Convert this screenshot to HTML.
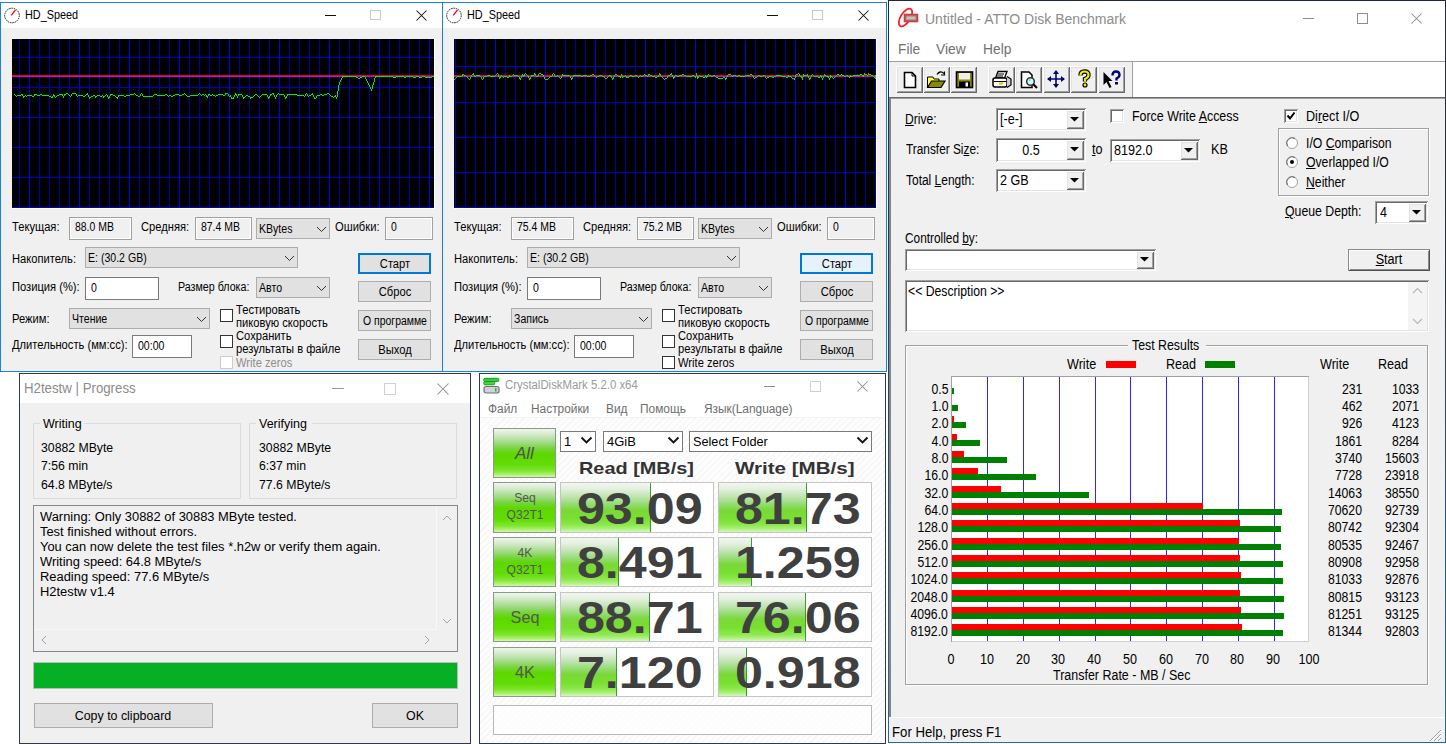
<!DOCTYPE html><html><head><meta charset="utf-8"><style>
html,body{margin:0;padding:0}
body{width:1446px;height:744px;overflow:hidden;position:relative;background:#fff;font-family:"Liberation Sans",sans-serif}
.a{position:absolute}
.t{position:absolute;white-space:pre;line-height:1}
</style></head><body>
<div class="a" style="left:0px;top:2px;width:445px;height:370px;background:#f0f0f0;border:1px solid #1883d7;box-sizing:border-box;"></div>
<div class="a" style="left:1px;top:3px;width:443px;height:25px;background:#fff;"></div>
<svg class="a" style="left:3px;top:6px" width="19" height="19"><circle cx="9" cy="9.5" r="7.3" fill="none" stroke="#222" stroke-width="1" stroke-dasharray="1.6 0.8"/><line x1="8.3" y1="9.3" x2="12.5" y2="3.8" stroke="#f00" stroke-width="1.3"/></svg>
<div class="t" style="left:25px;top:9px;font-size:12px;color:#000;font-weight:400;transform:scaleX(0.905);transform-origin:0 0;">HD_Speed</div>
<div class="a" style="left:325px;top:15px;width:11px;height:1px;background:#111;"></div>
<div class="a" style="left:370px;top:10px;width:11px;height:10px;border:1px solid #c8c8c8;box-sizing:border-box;"></div>
<svg class="a" style="left:415px;top:9px" width="13" height="13"><path d="M1.5 1.5 L11.5 11.5 M11.5 1.5 L1.5 11.5" stroke="#111" stroke-width="1.05"/></svg>
<div class="a" style="left:12px;top:39px;width:422px;height:169px;background:#000;"></div>
<div class="a" style="left:12px;top:208px;width:423px;height:1px;background:#fff;"></div>
<div class="a" style="left:434px;top:39px;width:1px;height:170px;background:#fff;"></div>
<svg class="a" style="left:12px;top:39px" width="422" height="169" shape-rendering="crispEdges"><rect x="0" y="18" width="422" height="1" fill="#0000c8"/><rect x="0" y="48" width="422" height="1" fill="#0000c8"/><rect x="0" y="78" width="422" height="1" fill="#0000c8"/><rect x="0" y="108" width="422" height="1" fill="#0000c8"/><rect x="0" y="138" width="422" height="1" fill="#0000c8"/><rect x="0" y="168" width="422" height="1" fill="#0000c8"/><rect x="7" y="0" width="1" height="169" fill="#0000a8"/><rect x="17" y="0" width="1" height="169" fill="#0000f0"/><rect x="27" y="0" width="1" height="169" fill="#0000a8"/><rect x="37" y="0" width="1" height="169" fill="#0000a8"/><rect x="47" y="0" width="1" height="169" fill="#0000a8"/><rect x="57" y="0" width="1" height="169" fill="#0000a8"/><rect x="67" y="0" width="1" height="169" fill="#0000f0"/><rect x="77" y="0" width="1" height="169" fill="#0000a8"/><rect x="87" y="0" width="1" height="169" fill="#0000a8"/><rect x="97" y="0" width="1" height="169" fill="#0000a8"/><rect x="107" y="0" width="1" height="169" fill="#0000a8"/><rect x="117" y="0" width="1" height="169" fill="#0000f0"/><rect x="127" y="0" width="1" height="169" fill="#0000a8"/><rect x="137" y="0" width="1" height="169" fill="#0000a8"/><rect x="147" y="0" width="1" height="169" fill="#0000a8"/><rect x="157" y="0" width="1" height="169" fill="#0000a8"/><rect x="167" y="0" width="1" height="169" fill="#0000f0"/><rect x="177" y="0" width="1" height="169" fill="#0000a8"/><rect x="187" y="0" width="1" height="169" fill="#0000a8"/><rect x="197" y="0" width="1" height="169" fill="#0000a8"/><rect x="207" y="0" width="1" height="169" fill="#0000a8"/><rect x="217" y="0" width="1" height="169" fill="#0000f0"/><rect x="227" y="0" width="1" height="169" fill="#0000a8"/><rect x="237" y="0" width="1" height="169" fill="#0000a8"/><rect x="247" y="0" width="1" height="169" fill="#0000a8"/><rect x="257" y="0" width="1" height="169" fill="#0000a8"/><rect x="267" y="0" width="1" height="169" fill="#0000f0"/><rect x="277" y="0" width="1" height="169" fill="#0000a8"/><rect x="287" y="0" width="1" height="169" fill="#0000a8"/><rect x="297" y="0" width="1" height="169" fill="#0000a8"/><rect x="307" y="0" width="1" height="169" fill="#0000a8"/><rect x="317" y="0" width="1" height="169" fill="#0000f0"/><rect x="327" y="0" width="1" height="169" fill="#0000a8"/><rect x="337" y="0" width="1" height="169" fill="#0000a8"/><rect x="347" y="0" width="1" height="169" fill="#0000a8"/><rect x="357" y="0" width="1" height="169" fill="#0000a8"/><rect x="367" y="0" width="1" height="169" fill="#0000f0"/><rect x="377" y="0" width="1" height="169" fill="#0000a8"/><rect x="387" y="0" width="1" height="169" fill="#0000a8"/><rect x="397" y="0" width="1" height="169" fill="#0000a8"/><rect x="407" y="0" width="1" height="169" fill="#0000a8"/><rect x="417" y="0" width="1" height="169" fill="#0000f0"/><rect x="0" y="36" width="422" height="1" fill="#e0002a"/><rect x="0" y="37" width="422" height="1" fill="#e000d0"/><rect x="2" y="55" width="1" height="1" fill="#00f000"/><rect x="3" y="56" width="1" height="1" fill="#00f000"/><rect x="4" y="57" width="1" height="1" fill="#00f000"/><rect x="5" y="56" width="1" height="1" fill="#00f000"/><rect x="6" y="56" width="1" height="1" fill="#00f000"/><rect x="7" y="56" width="1" height="1" fill="#00f000"/><rect x="8" y="56" width="1" height="1" fill="#00f000"/><rect x="9" y="55" width="1" height="1" fill="#00f000"/><rect x="10" y="55" width="1" height="1" fill="#00f000"/><rect x="10" y="56" width="1" height="1" fill="#00f000"/><rect x="11" y="57" width="1" height="1" fill="#00f000"/><rect x="11" y="58" width="1" height="1" fill="#00f000"/><rect x="12" y="57" width="1" height="1" fill="#00f000"/><rect x="13" y="56" width="1" height="1" fill="#00f000"/><rect x="14" y="57" width="1" height="1" fill="#00f000"/><rect x="15" y="56" width="1" height="1" fill="#00f000"/><rect x="16" y="56" width="1" height="1" fill="#00f000"/><rect x="17" y="56" width="1" height="1" fill="#00f000"/><rect x="18" y="56" width="1" height="1" fill="#00f000"/><rect x="19" y="56" width="1" height="1" fill="#00f000"/><rect x="20" y="57" width="1" height="1" fill="#00f000"/><rect x="21" y="57" width="1" height="1" fill="#00f000"/><rect x="22" y="55" width="1" height="1" fill="#00f000"/><rect x="22" y="56" width="1" height="1" fill="#00f000"/><rect x="23" y="55" width="1" height="1" fill="#00f000"/><rect x="24" y="55" width="1" height="1" fill="#00f000"/><rect x="25" y="56" width="1" height="1" fill="#00f000"/><rect x="26" y="56" width="1" height="1" fill="#00f000"/><rect x="27" y="56" width="1" height="1" fill="#00f000"/><rect x="28" y="55" width="1" height="1" fill="#00f000"/><rect x="29" y="55" width="1" height="1" fill="#00f000"/><rect x="30" y="56" width="1" height="1" fill="#00f000"/><rect x="31" y="56" width="1" height="1" fill="#00f000"/><rect x="32" y="56" width="1" height="1" fill="#00f000"/><rect x="33" y="56" width="1" height="1" fill="#00f000"/><rect x="34" y="56" width="1" height="1" fill="#00f000"/><rect x="35" y="56" width="1" height="1" fill="#00f000"/><rect x="36" y="56" width="1" height="1" fill="#00f000"/><rect x="37" y="57" width="1" height="1" fill="#00f000"/><rect x="38" y="57" width="1" height="1" fill="#00f000"/><rect x="39" y="58" width="1" height="1" fill="#00f000"/><rect x="40" y="57" width="1" height="1" fill="#00f000"/><rect x="40" y="58" width="1" height="1" fill="#00f000"/><rect x="41" y="55" width="1" height="1" fill="#00f000"/><rect x="41" y="56" width="1" height="1" fill="#00f000"/><rect x="42" y="56" width="1" height="1" fill="#00f000"/><rect x="42" y="57" width="1" height="1" fill="#00f000"/><rect x="43" y="58" width="1" height="1" fill="#00f000"/><rect x="44" y="57" width="1" height="1" fill="#00f000"/><rect x="45" y="56" width="1" height="1" fill="#00f000"/><rect x="46" y="56" width="1" height="1" fill="#00f000"/><rect x="47" y="55" width="1" height="1" fill="#00f000"/><rect x="48" y="55" width="1" height="1" fill="#00f000"/><rect x="49" y="55" width="1" height="1" fill="#00f000"/><rect x="50" y="55" width="1" height="1" fill="#00f000"/><rect x="50" y="56" width="1" height="1" fill="#00f000"/><rect x="51" y="57" width="1" height="1" fill="#00f000"/><rect x="51" y="58" width="1" height="1" fill="#00f000"/><rect x="52" y="55" width="1" height="1" fill="#00f000"/><rect x="52" y="56" width="1" height="1" fill="#00f000"/><rect x="53" y="55" width="1" height="1" fill="#00f000"/><rect x="54" y="54" width="1" height="1" fill="#00f000"/><rect x="55" y="54" width="1" height="1" fill="#00f000"/><rect x="56" y="55" width="1" height="1" fill="#00f000"/><rect x="57" y="56" width="1" height="1" fill="#00f000"/><rect x="58" y="57" width="1" height="1" fill="#00f000"/><rect x="59" y="55" width="1" height="1" fill="#00f000"/><rect x="59" y="56" width="1" height="1" fill="#00f000"/><rect x="60" y="54" width="1" height="1" fill="#00f000"/><rect x="61" y="54" width="1" height="1" fill="#00f000"/><rect x="62" y="54" width="1" height="1" fill="#00f000"/><rect x="63" y="54" width="1" height="1" fill="#00f000"/><rect x="64" y="55" width="1" height="1" fill="#00f000"/><rect x="64" y="56" width="1" height="1" fill="#00f000"/><rect x="65" y="57" width="1" height="1" fill="#00f000"/><rect x="66" y="56" width="1" height="1" fill="#00f000"/><rect x="67" y="56" width="1" height="1" fill="#00f000"/><rect x="68" y="56" width="1" height="1" fill="#00f000"/><rect x="69" y="56" width="1" height="1" fill="#00f000"/><rect x="70" y="56" width="1" height="1" fill="#00f000"/><rect x="71" y="57" width="1" height="1" fill="#00f000"/><rect x="72" y="57" width="1" height="1" fill="#00f000"/><rect x="73" y="56" width="1" height="1" fill="#00f000"/><rect x="74" y="55" width="1" height="1" fill="#00f000"/><rect x="75" y="54" width="1" height="1" fill="#00f000"/><rect x="75" y="55" width="1" height="1" fill="#00f000"/><rect x="76" y="56" width="1" height="1" fill="#00f000"/><rect x="76" y="57" width="1" height="1" fill="#00f000"/><rect x="77" y="58" width="1" height="1" fill="#00f000"/><rect x="77" y="59" width="1" height="1" fill="#00f000"/><rect x="78" y="58" width="1" height="1" fill="#00f000"/><rect x="79" y="57" width="1" height="1" fill="#00f000"/><rect x="80" y="57" width="1" height="1" fill="#00f000"/><rect x="81" y="56" width="1" height="1" fill="#00f000"/><rect x="82" y="56" width="1" height="1" fill="#00f000"/><rect x="83" y="57" width="1" height="1" fill="#00f000"/><rect x="83" y="58" width="1" height="1" fill="#00f000"/><rect x="84" y="57" width="1" height="1" fill="#00f000"/><rect x="85" y="56" width="1" height="1" fill="#00f000"/><rect x="86" y="56" width="1" height="1" fill="#00f000"/><rect x="87" y="56" width="1" height="1" fill="#00f000"/><rect x="88" y="57" width="1" height="1" fill="#00f000"/><rect x="89" y="57" width="1" height="1" fill="#00f000"/><rect x="90" y="56" width="1" height="1" fill="#00f000"/><rect x="91" y="57" width="1" height="1" fill="#00f000"/><rect x="91" y="58" width="1" height="1" fill="#00f000"/><rect x="92" y="57" width="1" height="1" fill="#00f000"/><rect x="93" y="56" width="1" height="1" fill="#00f000"/><rect x="94" y="55" width="1" height="1" fill="#00f000"/><rect x="95" y="56" width="1" height="1" fill="#00f000"/><rect x="95" y="57" width="1" height="1" fill="#00f000"/><rect x="96" y="58" width="1" height="1" fill="#00f000"/><rect x="96" y="59" width="1" height="1" fill="#00f000"/><rect x="97" y="57" width="1" height="1" fill="#00f000"/><rect x="97" y="58" width="1" height="1" fill="#00f000"/><rect x="98" y="55" width="1" height="1" fill="#00f000"/><rect x="98" y="56" width="1" height="1" fill="#00f000"/><rect x="99" y="55" width="1" height="1" fill="#00f000"/><rect x="100" y="55" width="1" height="1" fill="#00f000"/><rect x="101" y="56" width="1" height="1" fill="#00f000"/><rect x="102" y="56" width="1" height="1" fill="#00f000"/><rect x="103" y="57" width="1" height="1" fill="#00f000"/><rect x="104" y="58" width="1" height="1" fill="#00f000"/><rect x="105" y="58" width="1" height="1" fill="#00f000"/><rect x="105" y="59" width="1" height="1" fill="#00f000"/><rect x="106" y="56" width="1" height="1" fill="#00f000"/><rect x="106" y="57" width="1" height="1" fill="#00f000"/><rect x="107" y="56" width="1" height="1" fill="#00f000"/><rect x="108" y="56" width="1" height="1" fill="#00f000"/><rect x="109" y="56" width="1" height="1" fill="#00f000"/><rect x="110" y="56" width="1" height="1" fill="#00f000"/><rect x="111" y="56" width="1" height="1" fill="#00f000"/><rect x="112" y="57" width="1" height="1" fill="#00f000"/><rect x="113" y="57" width="1" height="1" fill="#00f000"/><rect x="114" y="56" width="1" height="1" fill="#00f000"/><rect x="115" y="56" width="1" height="1" fill="#00f000"/><rect x="116" y="56" width="1" height="1" fill="#00f000"/><rect x="117" y="56" width="1" height="1" fill="#00f000"/><rect x="118" y="55" width="1" height="1" fill="#00f000"/><rect x="119" y="55" width="1" height="1" fill="#00f000"/><rect x="120" y="55" width="1" height="1" fill="#00f000"/><rect x="121" y="55" width="1" height="1" fill="#00f000"/><rect x="122" y="54" width="1" height="1" fill="#00f000"/><rect x="123" y="55" width="1" height="1" fill="#00f000"/><rect x="124" y="56" width="1" height="1" fill="#00f000"/><rect x="125" y="56" width="1" height="1" fill="#00f000"/><rect x="126" y="57" width="1" height="1" fill="#00f000"/><rect x="127" y="57" width="1" height="1" fill="#00f000"/><rect x="128" y="55" width="1" height="1" fill="#00f000"/><rect x="128" y="56" width="1" height="1" fill="#00f000"/><rect x="129" y="54" width="1" height="1" fill="#00f000"/><rect x="130" y="55" width="1" height="1" fill="#00f000"/><rect x="130" y="56" width="1" height="1" fill="#00f000"/><rect x="131" y="57" width="1" height="1" fill="#00f000"/><rect x="132" y="57" width="1" height="1" fill="#00f000"/><rect x="133" y="57" width="1" height="1" fill="#00f000"/><rect x="134" y="57" width="1" height="1" fill="#00f000"/><rect x="135" y="57" width="1" height="1" fill="#00f000"/><rect x="136" y="57" width="1" height="1" fill="#00f000"/><rect x="137" y="57" width="1" height="1" fill="#00f000"/><rect x="138" y="57" width="1" height="1" fill="#00f000"/><rect x="139" y="57" width="1" height="1" fill="#00f000"/><rect x="140" y="57" width="1" height="1" fill="#00f000"/><rect x="141" y="56" width="1" height="1" fill="#00f000"/><rect x="142" y="55" width="1" height="1" fill="#00f000"/><rect x="143" y="55" width="1" height="1" fill="#00f000"/><rect x="144" y="55" width="1" height="1" fill="#00f000"/><rect x="145" y="56" width="1" height="1" fill="#00f000"/><rect x="146" y="56" width="1" height="1" fill="#00f000"/><rect x="147" y="56" width="1" height="1" fill="#00f000"/><rect x="148" y="56" width="1" height="1" fill="#00f000"/><rect x="149" y="56" width="1" height="1" fill="#00f000"/><rect x="150" y="56" width="1" height="1" fill="#00f000"/><rect x="151" y="56" width="1" height="1" fill="#00f000"/><rect x="152" y="56" width="1" height="1" fill="#00f000"/><rect x="153" y="55" width="1" height="1" fill="#00f000"/><rect x="154" y="55" width="1" height="1" fill="#00f000"/><rect x="155" y="56" width="1" height="1" fill="#00f000"/><rect x="156" y="57" width="1" height="1" fill="#00f000"/><rect x="157" y="56" width="1" height="1" fill="#00f000"/><rect x="158" y="56" width="1" height="1" fill="#00f000"/><rect x="159" y="57" width="1" height="1" fill="#00f000"/><rect x="160" y="57" width="1" height="1" fill="#00f000"/><rect x="161" y="56" width="1" height="1" fill="#00f000"/><rect x="162" y="56" width="1" height="1" fill="#00f000"/><rect x="163" y="55" width="1" height="1" fill="#00f000"/><rect x="164" y="55" width="1" height="1" fill="#00f000"/><rect x="165" y="55" width="1" height="1" fill="#00f000"/><rect x="166" y="55" width="1" height="1" fill="#00f000"/><rect x="167" y="56" width="1" height="1" fill="#00f000"/><rect x="168" y="56" width="1" height="1" fill="#00f000"/><rect x="169" y="56" width="1" height="1" fill="#00f000"/><rect x="170" y="55" width="1" height="1" fill="#00f000"/><rect x="171" y="55" width="1" height="1" fill="#00f000"/><rect x="172" y="54" width="1" height="1" fill="#00f000"/><rect x="173" y="55" width="1" height="1" fill="#00f000"/><rect x="174" y="56" width="1" height="1" fill="#00f000"/><rect x="175" y="57" width="1" height="1" fill="#00f000"/><rect x="176" y="57" width="1" height="1" fill="#00f000"/><rect x="177" y="57" width="1" height="1" fill="#00f000"/><rect x="178" y="56" width="1" height="1" fill="#00f000"/><rect x="179" y="56" width="1" height="1" fill="#00f000"/><rect x="180" y="56" width="1" height="1" fill="#00f000"/><rect x="181" y="56" width="1" height="1" fill="#00f000"/><rect x="182" y="56" width="1" height="1" fill="#00f000"/><rect x="183" y="56" width="1" height="1" fill="#00f000"/><rect x="184" y="56" width="1" height="1" fill="#00f000"/><rect x="185" y="56" width="1" height="1" fill="#00f000"/><rect x="186" y="55" width="1" height="1" fill="#00f000"/><rect x="187" y="54" width="1" height="1" fill="#00f000"/><rect x="188" y="55" width="1" height="1" fill="#00f000"/><rect x="189" y="56" width="1" height="1" fill="#00f000"/><rect x="190" y="55" width="1" height="1" fill="#00f000"/><rect x="191" y="55" width="1" height="1" fill="#00f000"/><rect x="192" y="56" width="1" height="1" fill="#00f000"/><rect x="193" y="55" width="1" height="1" fill="#00f000"/><rect x="194" y="56" width="1" height="1" fill="#00f000"/><rect x="194" y="57" width="1" height="1" fill="#00f000"/><rect x="195" y="57" width="1" height="1" fill="#00f000"/><rect x="195" y="58" width="1" height="1" fill="#00f000"/><rect x="196" y="55" width="1" height="1" fill="#00f000"/><rect x="196" y="56" width="1" height="1" fill="#00f000"/><rect x="197" y="55" width="1" height="1" fill="#00f000"/><rect x="198" y="56" width="1" height="1" fill="#00f000"/><rect x="199" y="56" width="1" height="1" fill="#00f000"/><rect x="200" y="55" width="1" height="1" fill="#00f000"/><rect x="201" y="56" width="1" height="1" fill="#00f000"/><rect x="202" y="56" width="1" height="1" fill="#00f000"/><rect x="203" y="57" width="1" height="1" fill="#00f000"/><rect x="204" y="56" width="1" height="1" fill="#00f000"/><rect x="205" y="56" width="1" height="1" fill="#00f000"/><rect x="206" y="55" width="1" height="1" fill="#00f000"/><rect x="207" y="55" width="1" height="1" fill="#00f000"/><rect x="208" y="55" width="1" height="1" fill="#00f000"/><rect x="209" y="55" width="1" height="1" fill="#00f000"/><rect x="210" y="55" width="1" height="1" fill="#00f000"/><rect x="211" y="56" width="1" height="1" fill="#00f000"/><rect x="212" y="56" width="1" height="1" fill="#00f000"/><rect x="213" y="54" width="1" height="1" fill="#00f000"/><rect x="213" y="55" width="1" height="1" fill="#00f000"/><rect x="214" y="54" width="1" height="1" fill="#00f000"/><rect x="215" y="54" width="1" height="1" fill="#00f000"/><rect x="216" y="55" width="1" height="1" fill="#00f000"/><rect x="216" y="56" width="1" height="1" fill="#00f000"/><rect x="217" y="57" width="1" height="1" fill="#00f000"/><rect x="218" y="56" width="1" height="1" fill="#00f000"/><rect x="218" y="57" width="1" height="1" fill="#00f000"/><rect x="219" y="58" width="1" height="1" fill="#00f000"/><rect x="219" y="59" width="1" height="1" fill="#00f000"/><rect x="220" y="59" width="1" height="1" fill="#00f000"/><rect x="221" y="58" width="1" height="1" fill="#00f000"/><rect x="221" y="59" width="1" height="1" fill="#00f000"/><rect x="222" y="56" width="1" height="1" fill="#00f000"/><rect x="222" y="57" width="1" height="1" fill="#00f000"/><rect x="223" y="54" width="1" height="1" fill="#00f000"/><rect x="223" y="55" width="1" height="1" fill="#00f000"/><rect x="224" y="55" width="1" height="1" fill="#00f000"/><rect x="224" y="56" width="1" height="1" fill="#00f000"/><rect x="225" y="57" width="1" height="1" fill="#00f000"/><rect x="225" y="58" width="1" height="1" fill="#00f000"/><rect x="226" y="55" width="1" height="1" fill="#00f000"/><rect x="226" y="56" width="1" height="1" fill="#00f000"/><rect x="227" y="55" width="1" height="1" fill="#00f000"/><rect x="228" y="55" width="1" height="1" fill="#00f000"/><rect x="229" y="55" width="1" height="1" fill="#00f000"/><rect x="230" y="56" width="1" height="1" fill="#00f000"/><rect x="230" y="57" width="1" height="1" fill="#00f000"/><rect x="231" y="58" width="1" height="1" fill="#00f000"/><rect x="231" y="59" width="1" height="1" fill="#00f000"/><rect x="232" y="58" width="1" height="1" fill="#00f000"/><rect x="233" y="57" width="1" height="1" fill="#00f000"/><rect x="234" y="56" width="1" height="1" fill="#00f000"/><rect x="235" y="56" width="1" height="1" fill="#00f000"/><rect x="236" y="57" width="1" height="1" fill="#00f000"/><rect x="237" y="57" width="1" height="1" fill="#00f000"/><rect x="238" y="58" width="1" height="1" fill="#00f000"/><rect x="238" y="59" width="1" height="1" fill="#00f000"/><rect x="239" y="58" width="1" height="1" fill="#00f000"/><rect x="240" y="58" width="1" height="1" fill="#00f000"/><rect x="241" y="57" width="1" height="1" fill="#00f000"/><rect x="242" y="56" width="1" height="1" fill="#00f000"/><rect x="243" y="55" width="1" height="1" fill="#00f000"/><rect x="244" y="55" width="1" height="1" fill="#00f000"/><rect x="245" y="56" width="1" height="1" fill="#00f000"/><rect x="246" y="57" width="1" height="1" fill="#00f000"/><rect x="247" y="58" width="1" height="1" fill="#00f000"/><rect x="248" y="57" width="1" height="1" fill="#00f000"/><rect x="249" y="56" width="1" height="1" fill="#00f000"/><rect x="250" y="55" width="1" height="1" fill="#00f000"/><rect x="251" y="55" width="1" height="1" fill="#00f000"/><rect x="252" y="55" width="1" height="1" fill="#00f000"/><rect x="253" y="55" width="1" height="1" fill="#00f000"/><rect x="254" y="55" width="1" height="1" fill="#00f000"/><rect x="255" y="56" width="1" height="1" fill="#00f000"/><rect x="255" y="57" width="1" height="1" fill="#00f000"/><rect x="256" y="58" width="1" height="1" fill="#00f000"/><rect x="256" y="59" width="1" height="1" fill="#00f000"/><rect x="257" y="57" width="1" height="1" fill="#00f000"/><rect x="257" y="58" width="1" height="1" fill="#00f000"/><rect x="258" y="55" width="1" height="1" fill="#00f000"/><rect x="258" y="56" width="1" height="1" fill="#00f000"/><rect x="259" y="55" width="1" height="1" fill="#00f000"/><rect x="260" y="54" width="1" height="1" fill="#00f000"/><rect x="261" y="54" width="1" height="1" fill="#00f000"/><rect x="261" y="55" width="1" height="1" fill="#00f000"/><rect x="262" y="56" width="1" height="1" fill="#00f000"/><rect x="262" y="57" width="1" height="1" fill="#00f000"/><rect x="263" y="58" width="1" height="1" fill="#00f000"/><rect x="263" y="59" width="1" height="1" fill="#00f000"/><rect x="264" y="56" width="1" height="1" fill="#00f000"/><rect x="264" y="57" width="1" height="1" fill="#00f000"/><rect x="265" y="55" width="1" height="1" fill="#00f000"/><rect x="266" y="54" width="1" height="1" fill="#00f000"/><rect x="267" y="55" width="1" height="1" fill="#00f000"/><rect x="268" y="55" width="1" height="1" fill="#00f000"/><rect x="269" y="55" width="1" height="1" fill="#00f000"/><rect x="270" y="55" width="1" height="1" fill="#00f000"/><rect x="271" y="55" width="1" height="1" fill="#00f000"/><rect x="272" y="56" width="1" height="1" fill="#00f000"/><rect x="272" y="57" width="1" height="1" fill="#00f000"/><rect x="273" y="58" width="1" height="1" fill="#00f000"/><rect x="273" y="59" width="1" height="1" fill="#00f000"/><rect x="274" y="57" width="1" height="1" fill="#00f000"/><rect x="274" y="58" width="1" height="1" fill="#00f000"/><rect x="275" y="55" width="1" height="1" fill="#00f000"/><rect x="275" y="56" width="1" height="1" fill="#00f000"/><rect x="276" y="55" width="1" height="1" fill="#00f000"/><rect x="277" y="55" width="1" height="1" fill="#00f000"/><rect x="278" y="55" width="1" height="1" fill="#00f000"/><rect x="279" y="55" width="1" height="1" fill="#00f000"/><rect x="280" y="55" width="1" height="1" fill="#00f000"/><rect x="281" y="55" width="1" height="1" fill="#00f000"/><rect x="282" y="55" width="1" height="1" fill="#00f000"/><rect x="283" y="55" width="1" height="1" fill="#00f000"/><rect x="284" y="55" width="1" height="1" fill="#00f000"/><rect x="285" y="56" width="1" height="1" fill="#00f000"/><rect x="286" y="56" width="1" height="1" fill="#00f000"/><rect x="287" y="56" width="1" height="1" fill="#00f000"/><rect x="288" y="56" width="1" height="1" fill="#00f000"/><rect x="289" y="56" width="1" height="1" fill="#00f000"/><rect x="290" y="56" width="1" height="1" fill="#00f000"/><rect x="291" y="56" width="1" height="1" fill="#00f000"/><rect x="292" y="57" width="1" height="1" fill="#00f000"/><rect x="293" y="55" width="1" height="1" fill="#00f000"/><rect x="293" y="56" width="1" height="1" fill="#00f000"/><rect x="294" y="54" width="1" height="1" fill="#00f000"/><rect x="295" y="55" width="1" height="1" fill="#00f000"/><rect x="295" y="56" width="1" height="1" fill="#00f000"/><rect x="296" y="57" width="1" height="1" fill="#00f000"/><rect x="297" y="56" width="1" height="1" fill="#00f000"/><rect x="298" y="56" width="1" height="1" fill="#00f000"/><rect x="299" y="55" width="1" height="1" fill="#00f000"/><rect x="300" y="54" width="1" height="1" fill="#00f000"/><rect x="300" y="55" width="1" height="1" fill="#00f000"/><rect x="301" y="56" width="1" height="1" fill="#00f000"/><rect x="301" y="57" width="1" height="1" fill="#00f000"/><rect x="302" y="58" width="1" height="1" fill="#00f000"/><rect x="302" y="59" width="1" height="1" fill="#00f000"/><rect x="303" y="59" width="1" height="1" fill="#00f000"/><rect x="304" y="57" width="1" height="1" fill="#00f000"/><rect x="304" y="58" width="1" height="1" fill="#00f000"/><rect x="305" y="56" width="1" height="1" fill="#00f000"/><rect x="306" y="56" width="1" height="1" fill="#00f000"/><rect x="307" y="56" width="1" height="1" fill="#00f000"/><rect x="308" y="55" width="1" height="1" fill="#00f000"/><rect x="309" y="55" width="1" height="1" fill="#00f000"/><rect x="310" y="56" width="1" height="1" fill="#00f000"/><rect x="311" y="56" width="1" height="1" fill="#00f000"/><rect x="312" y="55" width="1" height="1" fill="#00f000"/><rect x="313" y="55" width="1" height="1" fill="#00f000"/><rect x="314" y="55" width="1" height="1" fill="#00f000"/><rect x="315" y="54" width="1" height="1" fill="#00f000"/><rect x="316" y="54" width="1" height="1" fill="#00f000"/><rect x="317" y="55" width="1" height="1" fill="#00f000"/><rect x="318" y="56" width="1" height="1" fill="#00f000"/><rect x="319" y="57" width="1" height="1" fill="#00f000"/><rect x="320" y="57" width="1" height="1" fill="#00f000"/><rect x="321" y="58" width="1" height="1" fill="#00f000"/><rect x="322" y="57" width="1" height="1" fill="#00f000"/><rect x="323" y="56" width="1" height="1" fill="#00f000"/><rect x="323" y="57" width="1" height="1" fill="#00f000"/><rect x="324" y="58" width="1" height="1" fill="#00f000"/><rect x="324" y="59" width="1" height="1" fill="#00f000"/><rect x="325" y="52" width="1" height="1" fill="#00f000"/><rect x="325" y="53" width="1" height="1" fill="#00f000"/><rect x="325" y="54" width="1" height="1" fill="#00f000"/><rect x="325" y="55" width="1" height="1" fill="#00f000"/><rect x="325" y="56" width="1" height="1" fill="#00f000"/><rect x="325" y="57" width="1" height="1" fill="#00f000"/><rect x="326" y="46" width="1" height="1" fill="#00f000"/><rect x="326" y="47" width="1" height="1" fill="#00f000"/><rect x="326" y="48" width="1" height="1" fill="#00f000"/><rect x="326" y="49" width="1" height="1" fill="#00f000"/><rect x="326" y="50" width="1" height="1" fill="#00f000"/><rect x="326" y="51" width="1" height="1" fill="#00f000"/><rect x="327" y="43" width="1" height="1" fill="#00f000"/><rect x="327" y="44" width="1" height="1" fill="#00f000"/><rect x="327" y="45" width="1" height="1" fill="#00f000"/><rect x="328" y="41" width="1" height="1" fill="#00f000"/><rect x="328" y="42" width="1" height="1" fill="#00f000"/><rect x="329" y="39" width="1" height="1" fill="#00f000"/><rect x="329" y="40" width="1" height="1" fill="#00f000"/><rect x="330" y="37" width="1" height="1" fill="#00f000"/><rect x="330" y="38" width="1" height="1" fill="#00f000"/><rect x="331" y="37" width="1" height="1" fill="#00f000"/><rect x="332" y="37" width="1" height="1" fill="#00f000"/><rect x="333" y="37" width="1" height="1" fill="#00f000"/><rect x="334" y="37" width="1" height="1" fill="#00f000"/><rect x="335" y="37" width="1" height="1" fill="#00f000"/><rect x="336" y="37" width="1" height="1" fill="#00f000"/><rect x="337" y="37" width="1" height="1" fill="#00f000"/><rect x="338" y="37" width="1" height="1" fill="#00f000"/><rect x="339" y="37" width="1" height="1" fill="#00f000"/><rect x="340" y="37" width="1" height="1" fill="#00f000"/><rect x="341" y="37" width="1" height="1" fill="#00f000"/><rect x="342" y="37" width="1" height="1" fill="#00f000"/><rect x="343" y="37" width="1" height="1" fill="#00f000"/><rect x="344" y="38" width="1" height="1" fill="#00f000"/><rect x="345" y="38" width="1" height="1" fill="#00f000"/><rect x="346" y="39" width="1" height="1" fill="#00f000"/><rect x="347" y="39" width="1" height="1" fill="#00f000"/><rect x="348" y="38" width="1" height="1" fill="#00f000"/><rect x="349" y="38" width="1" height="1" fill="#00f000"/><rect x="350" y="37" width="1" height="1" fill="#00f000"/><rect x="351" y="37" width="1" height="1" fill="#00f000"/><rect x="352" y="37" width="1" height="1" fill="#00f000"/><rect x="353" y="38" width="1" height="1" fill="#00f000"/><rect x="353" y="39" width="1" height="1" fill="#00f000"/><rect x="354" y="40" width="1" height="1" fill="#00f000"/><rect x="354" y="41" width="1" height="1" fill="#00f000"/><rect x="355" y="42" width="1" height="1" fill="#00f000"/><rect x="355" y="43" width="1" height="1" fill="#00f000"/><rect x="356" y="44" width="1" height="1" fill="#00f000"/><rect x="356" y="45" width="1" height="1" fill="#00f000"/><rect x="357" y="46" width="1" height="1" fill="#00f000"/><rect x="357" y="47" width="1" height="1" fill="#00f000"/><rect x="358" y="48" width="1" height="1" fill="#00f000"/><rect x="358" y="49" width="1" height="1" fill="#00f000"/><rect x="359" y="50" width="1" height="1" fill="#00f000"/><rect x="359" y="51" width="1" height="1" fill="#00f000"/><rect x="360" y="46" width="1" height="1" fill="#00f000"/><rect x="360" y="47" width="1" height="1" fill="#00f000"/><rect x="360" y="48" width="1" height="1" fill="#00f000"/><rect x="360" y="49" width="1" height="1" fill="#00f000"/><rect x="361" y="43" width="1" height="1" fill="#00f000"/><rect x="361" y="44" width="1" height="1" fill="#00f000"/><rect x="361" y="45" width="1" height="1" fill="#00f000"/><rect x="362" y="39" width="1" height="1" fill="#00f000"/><rect x="362" y="40" width="1" height="1" fill="#00f000"/><rect x="362" y="41" width="1" height="1" fill="#00f000"/><rect x="362" y="42" width="1" height="1" fill="#00f000"/><rect x="363" y="37" width="1" height="1" fill="#00f000"/><rect x="363" y="38" width="1" height="1" fill="#00f000"/><rect x="364" y="37" width="1" height="1" fill="#00f000"/><rect x="365" y="37" width="1" height="1" fill="#00f000"/><rect x="366" y="37" width="1" height="1" fill="#00f000"/><rect x="367" y="37" width="1" height="1" fill="#00f000"/><rect x="368" y="37" width="1" height="1" fill="#00f000"/><rect x="369" y="37" width="1" height="1" fill="#00f000"/><rect x="370" y="37" width="1" height="1" fill="#00f000"/><rect x="371" y="37" width="1" height="1" fill="#00f000"/><rect x="372" y="37" width="1" height="1" fill="#00f000"/><rect x="373" y="37" width="1" height="1" fill="#00f000"/><rect x="374" y="37" width="1" height="1" fill="#00f000"/><rect x="375" y="37" width="1" height="1" fill="#00f000"/><rect x="376" y="37" width="1" height="1" fill="#00f000"/><rect x="377" y="37" width="1" height="1" fill="#00f000"/><rect x="378" y="37" width="1" height="1" fill="#00f000"/><rect x="379" y="37" width="1" height="1" fill="#00f000"/><rect x="380" y="37" width="1" height="1" fill="#00f000"/><rect x="381" y="38" width="1" height="1" fill="#00f000"/><rect x="382" y="38" width="1" height="1" fill="#00f000"/><rect x="383" y="38" width="1" height="1" fill="#00f000"/><rect x="384" y="37" width="1" height="1" fill="#00f000"/><rect x="385" y="37" width="1" height="1" fill="#00f000"/><rect x="386" y="37" width="1" height="1" fill="#00f000"/><rect x="387" y="37" width="1" height="1" fill="#00f000"/><rect x="388" y="37" width="1" height="1" fill="#00f000"/><rect x="389" y="37" width="1" height="1" fill="#00f000"/><rect x="390" y="37" width="1" height="1" fill="#00f000"/><rect x="391" y="37" width="1" height="1" fill="#00f000"/><rect x="392" y="38" width="1" height="1" fill="#00f000"/><rect x="393" y="38" width="1" height="1" fill="#00f000"/><rect x="394" y="37" width="1" height="1" fill="#00f000"/><rect x="395" y="37" width="1" height="1" fill="#00f000"/><rect x="396" y="37" width="1" height="1" fill="#00f000"/><rect x="397" y="37" width="1" height="1" fill="#00f000"/><rect x="398" y="37" width="1" height="1" fill="#00f000"/><rect x="399" y="37" width="1" height="1" fill="#00f000"/><rect x="400" y="37" width="1" height="1" fill="#00f000"/><rect x="401" y="38" width="1" height="1" fill="#00f000"/><rect x="402" y="38" width="1" height="1" fill="#00f000"/><rect x="403" y="38" width="1" height="1" fill="#00f000"/><rect x="404" y="37" width="1" height="1" fill="#00f000"/><rect x="405" y="37" width="1" height="1" fill="#00f000"/><rect x="406" y="37" width="1" height="1" fill="#00f000"/><rect x="407" y="38" width="1" height="1" fill="#00f000"/><rect x="408" y="38" width="1" height="1" fill="#00f000"/><rect x="409" y="38" width="1" height="1" fill="#00f000"/><rect x="410" y="37" width="1" height="1" fill="#00f000"/><rect x="411" y="37" width="1" height="1" fill="#00f000"/><rect x="412" y="37" width="1" height="1" fill="#00f000"/><rect x="413" y="38" width="1" height="1" fill="#00f000"/><rect x="414" y="38" width="1" height="1" fill="#00f000"/><rect x="415" y="38" width="1" height="1" fill="#00f000"/><rect x="416" y="38" width="1" height="1" fill="#00f000"/><rect x="417" y="38" width="1" height="1" fill="#00f000"/><rect x="418" y="38" width="1" height="1" fill="#00f000"/><rect x="419" y="38" width="1" height="1" fill="#00f000"/><rect x="420" y="37" width="1" height="1" fill="#00f000"/><rect x="421" y="37" width="1" height="1" fill="#00f000"/></svg>
<div class="t" style="left:12px;top:221px;font-size:12px;color:#000;font-weight:400;transform:scaleX(0.93);transform-origin:0 0;">Текущая:</div>
<div class="a" style="left:69px;top:217px;width:63px;height:23px;background:#f0f0f0;border:1px solid #a0a0a0;box-sizing:border-box;box-shadow:inset 1px 1px 0 #fff, inset -1px -1px 0 #fff"></div>
<div class="t" style="left:75px;top:221px;font-size:12px;color:#000;font-weight:400;transform:scaleX(0.87);transform-origin:0 0;">88.0 MB</div>
<div class="t" style="left:141px;top:221px;font-size:12px;color:#000;font-weight:400;transform:scaleX(0.93);transform-origin:0 0;">Средняя:</div>
<div class="a" style="left:195px;top:217px;width:57px;height:23px;background:#f0f0f0;border:1px solid #a0a0a0;box-sizing:border-box;box-shadow:inset 1px 1px 0 #fff, inset -1px -1px 0 #fff"></div>
<div class="t" style="left:201px;top:221px;font-size:12px;color:#000;font-weight:400;transform:scaleX(0.87);transform-origin:0 0;">87.4 MB</div>
<div class="a" style="left:256px;top:218px;width:74px;height:21px;background:#e1e1e1;border:1px solid #adadad;box-sizing:border-box;"></div>
<div class="t" style="left:259px;top:223px;font-size:12px;color:#000;font-weight:400;transform:scaleX(0.88);transform-origin:0 0;">KBytes</div>
<svg class="a" style="left:315.5px;top:225.75px" width="11" height="6.5"><polyline points="1,1 5.5,5.5 10,1" fill="none" stroke="#333" stroke-width="1"/></svg>
<div class="t" style="left:335px;top:221px;font-size:12px;color:#000;font-weight:400;transform:scaleX(0.93);transform-origin:0 0;">Ошибки:</div>
<div class="a" style="left:385px;top:217px;width:48px;height:23px;background:#f0f0f0;border:1px solid #a0a0a0;box-sizing:border-box;box-shadow:inset 1px 1px 0 #fff, inset -1px -1px 0 #fff"></div>
<div class="t" style="left:391px;top:221px;font-size:12px;color:#000;font-weight:400;transform:scaleX(0.87);transform-origin:0 0;">0</div>
<div class="t" style="left:12px;top:253px;font-size:12px;color:#000;font-weight:400;transform:scaleX(0.93);transform-origin:0 0;">Накопитель:</div>
<div class="a" style="left:85px;top:247px;width:213px;height:21px;background:#e1e1e1;border:1px solid #adadad;box-sizing:border-box;"></div>
<div class="t" style="left:88px;top:252px;font-size:12px;color:#000;font-weight:400;transform:scaleX(0.88);transform-origin:0 0;">E: (30.2 GB)</div>
<svg class="a" style="left:283.5px;top:254.75px" width="11" height="6.5"><polyline points="1,1 5.5,5.5 10,1" fill="none" stroke="#333" stroke-width="1"/></svg>
<div class="a" style="left:358px;top:253px;width:73px;height:21px;background:#e1e1e1;border:2px solid #0078d7;box-sizing:border-box;"></div>
<div class="t" style="left:194.5px;width:400px;text-align:center;top:258px;font-size:12px;color:#000;font-weight:400;transform:scaleX(0.93);">Старт</div>
<div class="t" style="left:12px;top:281px;font-size:12px;color:#000;font-weight:400;transform:scaleX(0.93);transform-origin:0 0;">Позиция (%):</div>
<div class="a" style="left:85px;top:277px;width:74px;height:23px;background:#fff;border:1px solid #7a7a7a;box-sizing:border-box;"></div>
<div class="t" style="left:91px;top:282px;font-size:12px;color:#000;font-weight:400;transform:scaleX(0.88);transform-origin:0 0;">0</div>
<div class="t" style="left:178px;top:281px;font-size:12px;color:#000;font-weight:400;transform:scaleX(0.89);transform-origin:0 0;">Размер блока:</div>
<div class="a" style="left:256px;top:277px;width:74px;height:21px;background:#e1e1e1;border:1px solid #adadad;box-sizing:border-box;"></div>
<div class="t" style="left:259px;top:282px;font-size:12px;color:#000;font-weight:400;transform:scaleX(0.88);transform-origin:0 0;">Авто</div>
<svg class="a" style="left:315.5px;top:284.75px" width="11" height="6.5"><polyline points="1,1 5.5,5.5 10,1" fill="none" stroke="#333" stroke-width="1"/></svg>
<div class="a" style="left:358px;top:281px;width:73px;height:21px;background:#e1e1e1;border:1px solid #adadad;box-sizing:border-box;"></div>
<div class="t" style="left:194.5px;width:400px;text-align:center;top:286px;font-size:12px;color:#000;font-weight:400;transform:scaleX(0.93);">Сброс</div>
<div class="t" style="left:12px;top:313px;font-size:12px;color:#000;font-weight:400;transform:scaleX(0.93);transform-origin:0 0;">Режим:</div>
<div class="a" style="left:69px;top:308px;width:141px;height:21px;background:#e1e1e1;border:1px solid #adadad;box-sizing:border-box;"></div>
<div class="t" style="left:72px;top:313px;font-size:12px;color:#000;font-weight:400;transform:scaleX(0.88);transform-origin:0 0;">Чтение</div>
<svg class="a" style="left:195.5px;top:315.75px" width="11" height="6.5"><polyline points="1,1 5.5,5.5 10,1" fill="none" stroke="#333" stroke-width="1"/></svg>
<div class="a" style="left:220px;top:309px;width:13px;height:13px;background:#fff;border:1px solid #333;box-sizing:border-box;"></div>
<div class="t" style="left:236px;top:304px;font-size:12px;color:#000;font-weight:400;transform:scaleX(0.93);transform-origin:0 0;">Тестировать</div>
<div class="t" style="left:236px;top:317px;font-size:12px;color:#000;font-weight:400;transform:scaleX(0.93);transform-origin:0 0;">пиковую скорость</div>
<div class="a" style="left:358px;top:310px;width:73px;height:21px;background:#e1e1e1;border:1px solid #adadad;box-sizing:border-box;"></div>
<div class="t" style="left:194.5px;width:400px;text-align:center;top:315px;font-size:12px;color:#000;font-weight:400;transform:scaleX(0.87);">О программе</div>
<div class="t" style="left:12px;top:339px;font-size:12px;color:#000;font-weight:400;transform:scaleX(0.93);transform-origin:0 0;">Длительность (мм:сс):</div>
<div class="a" style="left:132px;top:335px;width:60px;height:23px;background:#fff;border:1px solid #7a7a7a;box-sizing:border-box;"></div>
<div class="t" style="left:138px;top:340px;font-size:12px;color:#000;font-weight:400;transform:scaleX(0.88);transform-origin:0 0;">00:00</div>
<div class="a" style="left:220px;top:335px;width:13px;height:13px;background:#fff;border:1px solid #333;box-sizing:border-box;"></div>
<div class="t" style="left:236px;top:330px;font-size:12px;color:#000;font-weight:400;transform:scaleX(0.93);transform-origin:0 0;">Сохранить</div>
<div class="t" style="left:236px;top:343px;font-size:12px;color:#000;font-weight:400;transform:scaleX(0.93);transform-origin:0 0;">результаты в файле</div>
<div class="a" style="left:358px;top:339px;width:73px;height:21px;background:#e1e1e1;border:1px solid #adadad;box-sizing:border-box;"></div>
<div class="t" style="left:194.5px;width:400px;text-align:center;top:344px;font-size:12px;color:#000;font-weight:400;transform:scaleX(0.93);">Выход</div>
<div class="a" style="left:220px;top:356px;width:13px;height:13px;background:#fff;border:1px solid #cccccc;box-sizing:border-box;"></div>
<div class="t" style="left:236px;top:357px;font-size:12px;color:#8d8d8d;font-weight:400;transform:scaleX(0.93);transform-origin:0 0;">Write zeros</div>
<div class="a" style="left:442px;top:2px;width:445px;height:370px;background:#f0f0f0;border:1px solid #1883d7;box-sizing:border-box;"></div>
<div class="a" style="left:443px;top:3px;width:443px;height:25px;background:#fff;"></div>
<svg class="a" style="left:445px;top:6px" width="19" height="19"><circle cx="9" cy="9.5" r="7.3" fill="none" stroke="#222" stroke-width="1" stroke-dasharray="1.6 0.8"/><line x1="8.3" y1="9.3" x2="12.5" y2="3.8" stroke="#f00" stroke-width="1.3"/></svg>
<div class="t" style="left:467px;top:9px;font-size:12px;color:#000;font-weight:400;transform:scaleX(0.905);transform-origin:0 0;">HD_Speed</div>
<div class="a" style="left:767px;top:15px;width:11px;height:1px;background:#111;"></div>
<div class="a" style="left:812px;top:10px;width:11px;height:10px;border:1px solid #c8c8c8;box-sizing:border-box;"></div>
<svg class="a" style="left:857px;top:9px" width="13" height="13"><path d="M1.5 1.5 L11.5 11.5 M11.5 1.5 L1.5 11.5" stroke="#111" stroke-width="1.05"/></svg>
<div class="a" style="left:454px;top:39px;width:422px;height:169px;background:#000;"></div>
<div class="a" style="left:454px;top:208px;width:423px;height:1px;background:#fff;"></div>
<div class="a" style="left:876px;top:39px;width:1px;height:170px;background:#fff;"></div>
<svg class="a" style="left:454px;top:39px" width="422" height="169" shape-rendering="crispEdges"><rect x="0" y="27" width="422" height="1" fill="#0000c8"/><rect x="0" y="63" width="422" height="1" fill="#0000c8"/><rect x="0" y="98" width="422" height="1" fill="#0000c8"/><rect x="0" y="133" width="422" height="1" fill="#0000c8"/><rect x="0" y="168" width="422" height="1" fill="#0000c8"/><rect x="1" y="0" width="1" height="169" fill="#0000a8"/><rect x="11" y="0" width="1" height="169" fill="#0000a8"/><rect x="21" y="0" width="1" height="169" fill="#0000a8"/><rect x="31" y="0" width="1" height="169" fill="#0000a8"/><rect x="41" y="0" width="1" height="169" fill="#0000f0"/><rect x="51" y="0" width="1" height="169" fill="#0000a8"/><rect x="61" y="0" width="1" height="169" fill="#0000a8"/><rect x="71" y="0" width="1" height="169" fill="#0000a8"/><rect x="81" y="0" width="1" height="169" fill="#0000a8"/><rect x="91" y="0" width="1" height="169" fill="#0000f0"/><rect x="101" y="0" width="1" height="169" fill="#0000a8"/><rect x="111" y="0" width="1" height="169" fill="#0000a8"/><rect x="121" y="0" width="1" height="169" fill="#0000a8"/><rect x="131" y="0" width="1" height="169" fill="#0000a8"/><rect x="141" y="0" width="1" height="169" fill="#0000f0"/><rect x="151" y="0" width="1" height="169" fill="#0000a8"/><rect x="161" y="0" width="1" height="169" fill="#0000a8"/><rect x="171" y="0" width="1" height="169" fill="#0000a8"/><rect x="181" y="0" width="1" height="169" fill="#0000a8"/><rect x="191" y="0" width="1" height="169" fill="#0000f0"/><rect x="201" y="0" width="1" height="169" fill="#0000a8"/><rect x="211" y="0" width="1" height="169" fill="#0000a8"/><rect x="221" y="0" width="1" height="169" fill="#0000a8"/><rect x="231" y="0" width="1" height="169" fill="#0000a8"/><rect x="241" y="0" width="1" height="169" fill="#0000f0"/><rect x="251" y="0" width="1" height="169" fill="#0000a8"/><rect x="261" y="0" width="1" height="169" fill="#0000a8"/><rect x="271" y="0" width="1" height="169" fill="#0000a8"/><rect x="281" y="0" width="1" height="169" fill="#0000a8"/><rect x="291" y="0" width="1" height="169" fill="#0000f0"/><rect x="301" y="0" width="1" height="169" fill="#0000a8"/><rect x="311" y="0" width="1" height="169" fill="#0000a8"/><rect x="321" y="0" width="1" height="169" fill="#0000a8"/><rect x="331" y="0" width="1" height="169" fill="#0000a8"/><rect x="341" y="0" width="1" height="169" fill="#0000f0"/><rect x="351" y="0" width="1" height="169" fill="#0000a8"/><rect x="361" y="0" width="1" height="169" fill="#0000a8"/><rect x="371" y="0" width="1" height="169" fill="#0000a8"/><rect x="381" y="0" width="1" height="169" fill="#0000a8"/><rect x="391" y="0" width="1" height="169" fill="#0000f0"/><rect x="401" y="0" width="1" height="169" fill="#0000a8"/><rect x="411" y="0" width="1" height="169" fill="#0000a8"/><rect x="421" y="0" width="1" height="169" fill="#0000a8"/><rect x="0" y="36" width="422" height="1" fill="#e0002a"/><rect x="0" y="37" width="422" height="1" fill="#e000d0"/><rect x="0" y="40" width="1" height="1" fill="#00f000"/><rect x="1" y="39" width="1" height="1" fill="#00f000"/><rect x="2" y="38" width="1" height="1" fill="#00f000"/><rect x="3" y="37" width="1" height="1" fill="#00f000"/><rect x="4" y="37" width="1" height="1" fill="#00f000"/><rect x="5" y="37" width="1" height="1" fill="#00f000"/><rect x="6" y="37" width="1" height="1" fill="#00f000"/><rect x="7" y="37" width="1" height="1" fill="#00f000"/><rect x="8" y="35" width="1" height="1" fill="#00f000"/><rect x="8" y="36" width="1" height="1" fill="#00f000"/><rect x="9" y="35" width="1" height="1" fill="#00f000"/><rect x="10" y="36" width="1" height="1" fill="#00f000"/><rect x="11" y="36" width="1" height="1" fill="#00f000"/><rect x="12" y="37" width="1" height="1" fill="#00f000"/><rect x="13" y="38" width="1" height="1" fill="#00f000"/><rect x="14" y="39" width="1" height="1" fill="#00f000"/><rect x="15" y="40" width="1" height="1" fill="#00f000"/><rect x="16" y="38" width="1" height="1" fill="#00f000"/><rect x="16" y="39" width="1" height="1" fill="#00f000"/><rect x="17" y="36" width="1" height="1" fill="#00f000"/><rect x="17" y="37" width="1" height="1" fill="#00f000"/><rect x="18" y="35" width="1" height="1" fill="#00f000"/><rect x="19" y="34" width="1" height="1" fill="#00f000"/><rect x="19" y="35" width="1" height="1" fill="#00f000"/><rect x="20" y="36" width="1" height="1" fill="#00f000"/><rect x="20" y="37" width="1" height="1" fill="#00f000"/><rect x="21" y="37" width="1" height="1" fill="#00f000"/><rect x="22" y="36" width="1" height="1" fill="#00f000"/><rect x="23" y="36" width="1" height="1" fill="#00f000"/><rect x="24" y="36" width="1" height="1" fill="#00f000"/><rect x="25" y="36" width="1" height="1" fill="#00f000"/><rect x="26" y="37" width="1" height="1" fill="#00f000"/><rect x="27" y="38" width="1" height="1" fill="#00f000"/><rect x="27" y="39" width="1" height="1" fill="#00f000"/><rect x="28" y="40" width="1" height="1" fill="#00f000"/><rect x="29" y="38" width="1" height="1" fill="#00f000"/><rect x="29" y="39" width="1" height="1" fill="#00f000"/><rect x="30" y="37" width="1" height="1" fill="#00f000"/><rect x="31" y="37" width="1" height="1" fill="#00f000"/><rect x="32" y="37" width="1" height="1" fill="#00f000"/><rect x="33" y="36" width="1" height="1" fill="#00f000"/><rect x="34" y="36" width="1" height="1" fill="#00f000"/><rect x="35" y="36" width="1" height="1" fill="#00f000"/><rect x="36" y="37" width="1" height="1" fill="#00f000"/><rect x="37" y="37" width="1" height="1" fill="#00f000"/><rect x="38" y="37" width="1" height="1" fill="#00f000"/><rect x="39" y="37" width="1" height="1" fill="#00f000"/><rect x="40" y="37" width="1" height="1" fill="#00f000"/><rect x="41" y="36" width="1" height="1" fill="#00f000"/><rect x="42" y="35" width="1" height="1" fill="#00f000"/><rect x="43" y="34" width="1" height="1" fill="#00f000"/><rect x="44" y="35" width="1" height="1" fill="#00f000"/><rect x="44" y="36" width="1" height="1" fill="#00f000"/><rect x="44" y="37" width="1" height="1" fill="#00f000"/><rect x="45" y="38" width="1" height="1" fill="#00f000"/><rect x="45" y="39" width="1" height="1" fill="#00f000"/><rect x="46" y="37" width="1" height="1" fill="#00f000"/><rect x="46" y="38" width="1" height="1" fill="#00f000"/><rect x="47" y="36" width="1" height="1" fill="#00f000"/><rect x="48" y="37" width="1" height="1" fill="#00f000"/><rect x="49" y="38" width="1" height="1" fill="#00f000"/><rect x="50" y="37" width="1" height="1" fill="#00f000"/><rect x="51" y="37" width="1" height="1" fill="#00f000"/><rect x="52" y="37" width="1" height="1" fill="#00f000"/><rect x="53" y="38" width="1" height="1" fill="#00f000"/><rect x="54" y="38" width="1" height="1" fill="#00f000"/><rect x="55" y="36" width="1" height="1" fill="#00f000"/><rect x="55" y="37" width="1" height="1" fill="#00f000"/><rect x="56" y="37" width="1" height="1" fill="#00f000"/><rect x="57" y="37" width="1" height="1" fill="#00f000"/><rect x="58" y="36" width="1" height="1" fill="#00f000"/><rect x="59" y="35" width="1" height="1" fill="#00f000"/><rect x="60" y="36" width="1" height="1" fill="#00f000"/><rect x="61" y="36" width="1" height="1" fill="#00f000"/><rect x="62" y="36" width="1" height="1" fill="#00f000"/><rect x="63" y="36" width="1" height="1" fill="#00f000"/><rect x="64" y="37" width="1" height="1" fill="#00f000"/><rect x="65" y="38" width="1" height="1" fill="#00f000"/><rect x="65" y="39" width="1" height="1" fill="#00f000"/><rect x="66" y="39" width="1" height="1" fill="#00f000"/><rect x="66" y="40" width="1" height="1" fill="#00f000"/><rect x="67" y="37" width="1" height="1" fill="#00f000"/><rect x="67" y="38" width="1" height="1" fill="#00f000"/><rect x="68" y="35" width="1" height="1" fill="#00f000"/><rect x="68" y="36" width="1" height="1" fill="#00f000"/><rect x="69" y="36" width="1" height="1" fill="#00f000"/><rect x="69" y="37" width="1" height="1" fill="#00f000"/><rect x="70" y="35" width="1" height="1" fill="#00f000"/><rect x="70" y="36" width="1" height="1" fill="#00f000"/><rect x="71" y="34" width="1" height="1" fill="#00f000"/><rect x="72" y="35" width="1" height="1" fill="#00f000"/><rect x="73" y="36" width="1" height="1" fill="#00f000"/><rect x="74" y="37" width="1" height="1" fill="#00f000"/><rect x="74" y="38" width="1" height="1" fill="#00f000"/><rect x="75" y="39" width="1" height="1" fill="#00f000"/><rect x="75" y="40" width="1" height="1" fill="#00f000"/><rect x="76" y="38" width="1" height="1" fill="#00f000"/><rect x="76" y="39" width="1" height="1" fill="#00f000"/><rect x="77" y="36" width="1" height="1" fill="#00f000"/><rect x="77" y="37" width="1" height="1" fill="#00f000"/><rect x="78" y="36" width="1" height="1" fill="#00f000"/><rect x="79" y="36" width="1" height="1" fill="#00f000"/><rect x="80" y="34" width="1" height="1" fill="#00f000"/><rect x="80" y="35" width="1" height="1" fill="#00f000"/><rect x="81" y="35" width="1" height="1" fill="#00f000"/><rect x="81" y="36" width="1" height="1" fill="#00f000"/><rect x="82" y="37" width="1" height="1" fill="#00f000"/><rect x="83" y="37" width="1" height="1" fill="#00f000"/><rect x="84" y="35" width="1" height="1" fill="#00f000"/><rect x="84" y="36" width="1" height="1" fill="#00f000"/><rect x="85" y="34" width="1" height="1" fill="#00f000"/><rect x="86" y="34" width="1" height="1" fill="#00f000"/><rect x="87" y="35" width="1" height="1" fill="#00f000"/><rect x="88" y="35" width="1" height="1" fill="#00f000"/><rect x="89" y="36" width="1" height="1" fill="#00f000"/><rect x="89" y="37" width="1" height="1" fill="#00f000"/><rect x="90" y="38" width="1" height="1" fill="#00f000"/><rect x="90" y="39" width="1" height="1" fill="#00f000"/><rect x="91" y="40" width="1" height="1" fill="#00f000"/><rect x="92" y="40" width="1" height="1" fill="#00f000"/><rect x="93" y="40" width="1" height="1" fill="#00f000"/><rect x="94" y="39" width="1" height="1" fill="#00f000"/><rect x="95" y="38" width="1" height="1" fill="#00f000"/><rect x="96" y="37" width="1" height="1" fill="#00f000"/><rect x="97" y="37" width="1" height="1" fill="#00f000"/><rect x="98" y="35" width="1" height="1" fill="#00f000"/><rect x="98" y="36" width="1" height="1" fill="#00f000"/><rect x="99" y="34" width="1" height="1" fill="#00f000"/><rect x="100" y="35" width="1" height="1" fill="#00f000"/><rect x="100" y="36" width="1" height="1" fill="#00f000"/><rect x="101" y="37" width="1" height="1" fill="#00f000"/><rect x="102" y="37" width="1" height="1" fill="#00f000"/><rect x="103" y="36" width="1" height="1" fill="#00f000"/><rect x="104" y="37" width="1" height="1" fill="#00f000"/><rect x="105" y="38" width="1" height="1" fill="#00f000"/><rect x="106" y="39" width="1" height="1" fill="#00f000"/><rect x="107" y="37" width="1" height="1" fill="#00f000"/><rect x="107" y="38" width="1" height="1" fill="#00f000"/><rect x="108" y="35" width="1" height="1" fill="#00f000"/><rect x="108" y="36" width="1" height="1" fill="#00f000"/><rect x="109" y="36" width="1" height="1" fill="#00f000"/><rect x="110" y="36" width="1" height="1" fill="#00f000"/><rect x="111" y="36" width="1" height="1" fill="#00f000"/><rect x="112" y="36" width="1" height="1" fill="#00f000"/><rect x="113" y="36" width="1" height="1" fill="#00f000"/><rect x="114" y="36" width="1" height="1" fill="#00f000"/><rect x="115" y="36" width="1" height="1" fill="#00f000"/><rect x="116" y="37" width="1" height="1" fill="#00f000"/><rect x="116" y="38" width="1" height="1" fill="#00f000"/><rect x="117" y="39" width="1" height="1" fill="#00f000"/><rect x="117" y="40" width="1" height="1" fill="#00f000"/><rect x="118" y="38" width="1" height="1" fill="#00f000"/><rect x="118" y="39" width="1" height="1" fill="#00f000"/><rect x="119" y="36" width="1" height="1" fill="#00f000"/><rect x="119" y="37" width="1" height="1" fill="#00f000"/><rect x="120" y="36" width="1" height="1" fill="#00f000"/><rect x="121" y="36" width="1" height="1" fill="#00f000"/><rect x="122" y="36" width="1" height="1" fill="#00f000"/><rect x="123" y="36" width="1" height="1" fill="#00f000"/><rect x="124" y="36" width="1" height="1" fill="#00f000"/><rect x="125" y="36" width="1" height="1" fill="#00f000"/><rect x="126" y="36" width="1" height="1" fill="#00f000"/><rect x="127" y="37" width="1" height="1" fill="#00f000"/><rect x="128" y="37" width="1" height="1" fill="#00f000"/><rect x="129" y="36" width="1" height="1" fill="#00f000"/><rect x="130" y="36" width="1" height="1" fill="#00f000"/><rect x="131" y="36" width="1" height="1" fill="#00f000"/><rect x="132" y="36" width="1" height="1" fill="#00f000"/><rect x="133" y="37" width="1" height="1" fill="#00f000"/><rect x="134" y="37" width="1" height="1" fill="#00f000"/><rect x="135" y="37" width="1" height="1" fill="#00f000"/><rect x="136" y="36" width="1" height="1" fill="#00f000"/><rect x="137" y="36" width="1" height="1" fill="#00f000"/><rect x="138" y="35" width="1" height="1" fill="#00f000"/><rect x="139" y="35" width="1" height="1" fill="#00f000"/><rect x="140" y="36" width="1" height="1" fill="#00f000"/><rect x="141" y="37" width="1" height="1" fill="#00f000"/><rect x="142" y="38" width="1" height="1" fill="#00f000"/><rect x="143" y="37" width="1" height="1" fill="#00f000"/><rect x="144" y="37" width="1" height="1" fill="#00f000"/><rect x="145" y="36" width="1" height="1" fill="#00f000"/><rect x="146" y="36" width="1" height="1" fill="#00f000"/><rect x="147" y="36" width="1" height="1" fill="#00f000"/><rect x="148" y="37" width="1" height="1" fill="#00f000"/><rect x="149" y="37" width="1" height="1" fill="#00f000"/><rect x="150" y="38" width="1" height="1" fill="#00f000"/><rect x="151" y="39" width="1" height="1" fill="#00f000"/><rect x="152" y="39" width="1" height="1" fill="#00f000"/><rect x="153" y="38" width="1" height="1" fill="#00f000"/><rect x="154" y="37" width="1" height="1" fill="#00f000"/><rect x="155" y="36" width="1" height="1" fill="#00f000"/><rect x="156" y="36" width="1" height="1" fill="#00f000"/><rect x="157" y="37" width="1" height="1" fill="#00f000"/><rect x="157" y="38" width="1" height="1" fill="#00f000"/><rect x="158" y="39" width="1" height="1" fill="#00f000"/><rect x="158" y="40" width="1" height="1" fill="#00f000"/><rect x="159" y="38" width="1" height="1" fill="#00f000"/><rect x="159" y="39" width="1" height="1" fill="#00f000"/><rect x="160" y="36" width="1" height="1" fill="#00f000"/><rect x="160" y="37" width="1" height="1" fill="#00f000"/><rect x="161" y="35" width="1" height="1" fill="#00f000"/><rect x="162" y="35" width="1" height="1" fill="#00f000"/><rect x="163" y="36" width="1" height="1" fill="#00f000"/><rect x="164" y="37" width="1" height="1" fill="#00f000"/><rect x="165" y="37" width="1" height="1" fill="#00f000"/><rect x="166" y="37" width="1" height="1" fill="#00f000"/><rect x="166" y="38" width="1" height="1" fill="#00f000"/><rect x="167" y="35" width="1" height="1" fill="#00f000"/><rect x="167" y="36" width="1" height="1" fill="#00f000"/><rect x="168" y="37" width="1" height="1" fill="#00f000"/><rect x="168" y="38" width="1" height="1" fill="#00f000"/><rect x="169" y="37" width="1" height="1" fill="#00f000"/><rect x="170" y="37" width="1" height="1" fill="#00f000"/><rect x="171" y="36" width="1" height="1" fill="#00f000"/><rect x="172" y="37" width="1" height="1" fill="#00f000"/><rect x="172" y="38" width="1" height="1" fill="#00f000"/><rect x="173" y="38" width="1" height="1" fill="#00f000"/><rect x="174" y="38" width="1" height="1" fill="#00f000"/><rect x="175" y="37" width="1" height="1" fill="#00f000"/><rect x="176" y="36" width="1" height="1" fill="#00f000"/><rect x="177" y="36" width="1" height="1" fill="#00f000"/><rect x="178" y="37" width="1" height="1" fill="#00f000"/><rect x="179" y="37" width="1" height="1" fill="#00f000"/><rect x="180" y="37" width="1" height="1" fill="#00f000"/><rect x="181" y="36" width="1" height="1" fill="#00f000"/><rect x="182" y="36" width="1" height="1" fill="#00f000"/><rect x="183" y="37" width="1" height="1" fill="#00f000"/><rect x="184" y="38" width="1" height="1" fill="#00f000"/><rect x="185" y="37" width="1" height="1" fill="#00f000"/><rect x="186" y="36" width="1" height="1" fill="#00f000"/><rect x="187" y="37" width="1" height="1" fill="#00f000"/><rect x="188" y="37" width="1" height="1" fill="#00f000"/><rect x="189" y="36" width="1" height="1" fill="#00f000"/><rect x="190" y="35" width="1" height="1" fill="#00f000"/><rect x="191" y="36" width="1" height="1" fill="#00f000"/><rect x="192" y="36" width="1" height="1" fill="#00f000"/><rect x="193" y="37" width="1" height="1" fill="#00f000"/><rect x="194" y="35" width="1" height="1" fill="#00f000"/><rect x="194" y="36" width="1" height="1" fill="#00f000"/><rect x="195" y="35" width="1" height="1" fill="#00f000"/><rect x="196" y="36" width="1" height="1" fill="#00f000"/><rect x="197" y="36" width="1" height="1" fill="#00f000"/><rect x="198" y="37" width="1" height="1" fill="#00f000"/><rect x="199" y="37" width="1" height="1" fill="#00f000"/><rect x="200" y="37" width="1" height="1" fill="#00f000"/><rect x="201" y="38" width="1" height="1" fill="#00f000"/><rect x="202" y="38" width="1" height="1" fill="#00f000"/><rect x="203" y="37" width="1" height="1" fill="#00f000"/><rect x="204" y="36" width="1" height="1" fill="#00f000"/><rect x="204" y="37" width="1" height="1" fill="#00f000"/><rect x="205" y="34" width="1" height="1" fill="#00f000"/><rect x="205" y="35" width="1" height="1" fill="#00f000"/><rect x="206" y="35" width="1" height="1" fill="#00f000"/><rect x="206" y="36" width="1" height="1" fill="#00f000"/><rect x="207" y="37" width="1" height="1" fill="#00f000"/><rect x="208" y="38" width="1" height="1" fill="#00f000"/><rect x="209" y="39" width="1" height="1" fill="#00f000"/><rect x="210" y="40" width="1" height="1" fill="#00f000"/><rect x="211" y="39" width="1" height="1" fill="#00f000"/><rect x="212" y="39" width="1" height="1" fill="#00f000"/><rect x="213" y="37" width="1" height="1" fill="#00f000"/><rect x="213" y="38" width="1" height="1" fill="#00f000"/><rect x="214" y="36" width="1" height="1" fill="#00f000"/><rect x="215" y="36" width="1" height="1" fill="#00f000"/><rect x="216" y="35" width="1" height="1" fill="#00f000"/><rect x="217" y="34" width="1" height="1" fill="#00f000"/><rect x="217" y="35" width="1" height="1" fill="#00f000"/><rect x="218" y="36" width="1" height="1" fill="#00f000"/><rect x="218" y="37" width="1" height="1" fill="#00f000"/><rect x="219" y="38" width="1" height="1" fill="#00f000"/><rect x="219" y="39" width="1" height="1" fill="#00f000"/><rect x="220" y="37" width="1" height="1" fill="#00f000"/><rect x="220" y="38" width="1" height="1" fill="#00f000"/><rect x="221" y="36" width="1" height="1" fill="#00f000"/><rect x="222" y="36" width="1" height="1" fill="#00f000"/><rect x="223" y="37" width="1" height="1" fill="#00f000"/><rect x="224" y="37" width="1" height="1" fill="#00f000"/><rect x="225" y="36" width="1" height="1" fill="#00f000"/><rect x="226" y="36" width="1" height="1" fill="#00f000"/><rect x="227" y="36" width="1" height="1" fill="#00f000"/><rect x="228" y="35" width="1" height="1" fill="#00f000"/><rect x="229" y="35" width="1" height="1" fill="#00f000"/><rect x="230" y="36" width="1" height="1" fill="#00f000"/><rect x="231" y="36" width="1" height="1" fill="#00f000"/><rect x="232" y="37" width="1" height="1" fill="#00f000"/><rect x="233" y="37" width="1" height="1" fill="#00f000"/><rect x="234" y="37" width="1" height="1" fill="#00f000"/><rect x="235" y="37" width="1" height="1" fill="#00f000"/><rect x="236" y="37" width="1" height="1" fill="#00f000"/><rect x="237" y="37" width="1" height="1" fill="#00f000"/><rect x="238" y="36" width="1" height="1" fill="#00f000"/><rect x="239" y="36" width="1" height="1" fill="#00f000"/><rect x="240" y="37" width="1" height="1" fill="#00f000"/><rect x="241" y="37" width="1" height="1" fill="#00f000"/><rect x="241" y="38" width="1" height="1" fill="#00f000"/><rect x="242" y="34" width="1" height="1" fill="#00f000"/><rect x="242" y="35" width="1" height="1" fill="#00f000"/><rect x="242" y="36" width="1" height="1" fill="#00f000"/><rect x="243" y="37" width="1" height="1" fill="#00f000"/><rect x="243" y="38" width="1" height="1" fill="#00f000"/><rect x="243" y="39" width="1" height="1" fill="#00f000"/><rect x="244" y="37" width="1" height="1" fill="#00f000"/><rect x="244" y="38" width="1" height="1" fill="#00f000"/><rect x="245" y="36" width="1" height="1" fill="#00f000"/><rect x="246" y="37" width="1" height="1" fill="#00f000"/><rect x="247" y="37" width="1" height="1" fill="#00f000"/><rect x="248" y="37" width="1" height="1" fill="#00f000"/><rect x="249" y="38" width="1" height="1" fill="#00f000"/><rect x="250" y="38" width="1" height="1" fill="#00f000"/><rect x="251" y="36" width="1" height="1" fill="#00f000"/><rect x="251" y="37" width="1" height="1" fill="#00f000"/><rect x="252" y="37" width="1" height="1" fill="#00f000"/><rect x="252" y="38" width="1" height="1" fill="#00f000"/><rect x="253" y="36" width="1" height="1" fill="#00f000"/><rect x="253" y="37" width="1" height="1" fill="#00f000"/><rect x="254" y="35" width="1" height="1" fill="#00f000"/><rect x="255" y="36" width="1" height="1" fill="#00f000"/><rect x="256" y="36" width="1" height="1" fill="#00f000"/><rect x="257" y="37" width="1" height="1" fill="#00f000"/><rect x="258" y="37" width="1" height="1" fill="#00f000"/><rect x="259" y="36" width="1" height="1" fill="#00f000"/><rect x="260" y="36" width="1" height="1" fill="#00f000"/><rect x="261" y="37" width="1" height="1" fill="#00f000"/><rect x="262" y="38" width="1" height="1" fill="#00f000"/><rect x="263" y="38" width="1" height="1" fill="#00f000"/><rect x="264" y="39" width="1" height="1" fill="#00f000"/><rect x="265" y="39" width="1" height="1" fill="#00f000"/><rect x="266" y="39" width="1" height="1" fill="#00f000"/><rect x="267" y="39" width="1" height="1" fill="#00f000"/><rect x="268" y="39" width="1" height="1" fill="#00f000"/><rect x="269" y="38" width="1" height="1" fill="#00f000"/><rect x="270" y="38" width="1" height="1" fill="#00f000"/><rect x="271" y="39" width="1" height="1" fill="#00f000"/><rect x="271" y="40" width="1" height="1" fill="#00f000"/><rect x="272" y="38" width="1" height="1" fill="#00f000"/><rect x="272" y="39" width="1" height="1" fill="#00f000"/><rect x="273" y="36" width="1" height="1" fill="#00f000"/><rect x="273" y="37" width="1" height="1" fill="#00f000"/><rect x="274" y="35" width="1" height="1" fill="#00f000"/><rect x="275" y="35" width="1" height="1" fill="#00f000"/><rect x="276" y="35" width="1" height="1" fill="#00f000"/><rect x="277" y="36" width="1" height="1" fill="#00f000"/><rect x="278" y="37" width="1" height="1" fill="#00f000"/><rect x="279" y="36" width="1" height="1" fill="#00f000"/><rect x="280" y="36" width="1" height="1" fill="#00f000"/><rect x="281" y="36" width="1" height="1" fill="#00f000"/><rect x="282" y="37" width="1" height="1" fill="#00f000"/><rect x="283" y="37" width="1" height="1" fill="#00f000"/><rect x="284" y="36" width="1" height="1" fill="#00f000"/><rect x="285" y="36" width="1" height="1" fill="#00f000"/><rect x="286" y="37" width="1" height="1" fill="#00f000"/><rect x="287" y="37" width="1" height="1" fill="#00f000"/><rect x="288" y="37" width="1" height="1" fill="#00f000"/><rect x="289" y="37" width="1" height="1" fill="#00f000"/><rect x="290" y="37" width="1" height="1" fill="#00f000"/><rect x="291" y="36" width="1" height="1" fill="#00f000"/><rect x="292" y="36" width="1" height="1" fill="#00f000"/><rect x="293" y="36" width="1" height="1" fill="#00f000"/><rect x="294" y="36" width="1" height="1" fill="#00f000"/><rect x="295" y="36" width="1" height="1" fill="#00f000"/><rect x="296" y="35" width="1" height="1" fill="#00f000"/><rect x="297" y="35" width="1" height="1" fill="#00f000"/><rect x="298" y="36" width="1" height="1" fill="#00f000"/><rect x="299" y="37" width="1" height="1" fill="#00f000"/><rect x="299" y="38" width="1" height="1" fill="#00f000"/><rect x="300" y="39" width="1" height="1" fill="#00f000"/><rect x="301" y="38" width="1" height="1" fill="#00f000"/><rect x="302" y="38" width="1" height="1" fill="#00f000"/><rect x="303" y="37" width="1" height="1" fill="#00f000"/><rect x="304" y="36" width="1" height="1" fill="#00f000"/><rect x="305" y="36" width="1" height="1" fill="#00f000"/><rect x="306" y="37" width="1" height="1" fill="#00f000"/><rect x="307" y="37" width="1" height="1" fill="#00f000"/><rect x="308" y="37" width="1" height="1" fill="#00f000"/><rect x="309" y="36" width="1" height="1" fill="#00f000"/><rect x="310" y="36" width="1" height="1" fill="#00f000"/><rect x="311" y="37" width="1" height="1" fill="#00f000"/><rect x="311" y="38" width="1" height="1" fill="#00f000"/><rect x="312" y="39" width="1" height="1" fill="#00f000"/><rect x="313" y="38" width="1" height="1" fill="#00f000"/><rect x="314" y="38" width="1" height="1" fill="#00f000"/><rect x="315" y="37" width="1" height="1" fill="#00f000"/><rect x="316" y="37" width="1" height="1" fill="#00f000"/><rect x="317" y="37" width="1" height="1" fill="#00f000"/><rect x="318" y="38" width="1" height="1" fill="#00f000"/><rect x="319" y="38" width="1" height="1" fill="#00f000"/><rect x="320" y="37" width="1" height="1" fill="#00f000"/><rect x="321" y="37" width="1" height="1" fill="#00f000"/><rect x="322" y="36" width="1" height="1" fill="#00f000"/><rect x="323" y="36" width="1" height="1" fill="#00f000"/><rect x="324" y="36" width="1" height="1" fill="#00f000"/><rect x="325" y="36" width="1" height="1" fill="#00f000"/><rect x="326" y="36" width="1" height="1" fill="#00f000"/><rect x="327" y="37" width="1" height="1" fill="#00f000"/><rect x="328" y="37" width="1" height="1" fill="#00f000"/><rect x="329" y="37" width="1" height="1" fill="#00f000"/><rect x="330" y="37" width="1" height="1" fill="#00f000"/><rect x="331" y="37" width="1" height="1" fill="#00f000"/><rect x="332" y="38" width="1" height="1" fill="#00f000"/><rect x="333" y="38" width="1" height="1" fill="#00f000"/><rect x="334" y="36" width="1" height="1" fill="#00f000"/><rect x="334" y="37" width="1" height="1" fill="#00f000"/><rect x="335" y="37" width="1" height="1" fill="#00f000"/><rect x="336" y="37" width="1" height="1" fill="#00f000"/><rect x="337" y="38" width="1" height="1" fill="#00f000"/><rect x="338" y="39" width="1" height="1" fill="#00f000"/><rect x="339" y="39" width="1" height="1" fill="#00f000"/><rect x="340" y="39" width="1" height="1" fill="#00f000"/><rect x="340" y="40" width="1" height="1" fill="#00f000"/><rect x="341" y="36" width="1" height="1" fill="#00f000"/><rect x="341" y="37" width="1" height="1" fill="#00f000"/><rect x="341" y="38" width="1" height="1" fill="#00f000"/><rect x="342" y="35" width="1" height="1" fill="#00f000"/><rect x="343" y="35" width="1" height="1" fill="#00f000"/><rect x="344" y="34" width="1" height="1" fill="#00f000"/><rect x="345" y="35" width="1" height="1" fill="#00f000"/><rect x="345" y="36" width="1" height="1" fill="#00f000"/><rect x="346" y="37" width="1" height="1" fill="#00f000"/><rect x="347" y="37" width="1" height="1" fill="#00f000"/><rect x="347" y="38" width="1" height="1" fill="#00f000"/><rect x="348" y="38" width="1" height="1" fill="#00f000"/><rect x="348" y="39" width="1" height="1" fill="#00f000"/><rect x="348" y="40" width="1" height="1" fill="#00f000"/><rect x="349" y="35" width="1" height="1" fill="#00f000"/><rect x="349" y="36" width="1" height="1" fill="#00f000"/><rect x="349" y="37" width="1" height="1" fill="#00f000"/><rect x="350" y="36" width="1" height="1" fill="#00f000"/><rect x="351" y="36" width="1" height="1" fill="#00f000"/><rect x="352" y="36" width="1" height="1" fill="#00f000"/><rect x="353" y="35" width="1" height="1" fill="#00f000"/><rect x="353" y="36" width="1" height="1" fill="#00f000"/><rect x="354" y="37" width="1" height="1" fill="#00f000"/><rect x="354" y="38" width="1" height="1" fill="#00f000"/><rect x="355" y="39" width="1" height="1" fill="#00f000"/><rect x="355" y="40" width="1" height="1" fill="#00f000"/><rect x="356" y="38" width="1" height="1" fill="#00f000"/><rect x="356" y="39" width="1" height="1" fill="#00f000"/><rect x="357" y="36" width="1" height="1" fill="#00f000"/><rect x="357" y="37" width="1" height="1" fill="#00f000"/><rect x="358" y="35" width="1" height="1" fill="#00f000"/><rect x="359" y="36" width="1" height="1" fill="#00f000"/><rect x="360" y="37" width="1" height="1" fill="#00f000"/><rect x="361" y="37" width="1" height="1" fill="#00f000"/><rect x="362" y="37" width="1" height="1" fill="#00f000"/><rect x="363" y="37" width="1" height="1" fill="#00f000"/><rect x="364" y="38" width="1" height="1" fill="#00f000"/><rect x="365" y="38" width="1" height="1" fill="#00f000"/><rect x="366" y="36" width="1" height="1" fill="#00f000"/><rect x="366" y="37" width="1" height="1" fill="#00f000"/><rect x="367" y="37" width="1" height="1" fill="#00f000"/><rect x="367" y="38" width="1" height="1" fill="#00f000"/><rect x="368" y="39" width="1" height="1" fill="#00f000"/><rect x="368" y="40" width="1" height="1" fill="#00f000"/><rect x="369" y="37" width="1" height="1" fill="#00f000"/><rect x="369" y="38" width="1" height="1" fill="#00f000"/><rect x="370" y="35" width="1" height="1" fill="#00f000"/><rect x="370" y="36" width="1" height="1" fill="#00f000"/><rect x="371" y="36" width="1" height="1" fill="#00f000"/><rect x="372" y="37" width="1" height="1" fill="#00f000"/><rect x="373" y="37" width="1" height="1" fill="#00f000"/><rect x="374" y="37" width="1" height="1" fill="#00f000"/><rect x="374" y="38" width="1" height="1" fill="#00f000"/><rect x="375" y="39" width="1" height="1" fill="#00f000"/><rect x="375" y="40" width="1" height="1" fill="#00f000"/><rect x="376" y="36" width="1" height="1" fill="#00f000"/><rect x="376" y="37" width="1" height="1" fill="#00f000"/><rect x="376" y="38" width="1" height="1" fill="#00f000"/><rect x="377" y="37" width="1" height="1" fill="#00f000"/><rect x="378" y="38" width="1" height="1" fill="#00f000"/><rect x="379" y="39" width="1" height="1" fill="#00f000"/><rect x="380" y="38" width="1" height="1" fill="#00f000"/><rect x="381" y="37" width="1" height="1" fill="#00f000"/><rect x="382" y="36" width="1" height="1" fill="#00f000"/><rect x="383" y="35" width="1" height="1" fill="#00f000"/><rect x="384" y="35" width="1" height="1" fill="#00f000"/><rect x="385" y="36" width="1" height="1" fill="#00f000"/><rect x="386" y="36" width="1" height="1" fill="#00f000"/><rect x="387" y="35" width="1" height="1" fill="#00f000"/><rect x="388" y="36" width="1" height="1" fill="#00f000"/><rect x="389" y="36" width="1" height="1" fill="#00f000"/><rect x="390" y="37" width="1" height="1" fill="#00f000"/><rect x="391" y="37" width="1" height="1" fill="#00f000"/><rect x="392" y="36" width="1" height="1" fill="#00f000"/><rect x="393" y="36" width="1" height="1" fill="#00f000"/><rect x="394" y="37" width="1" height="1" fill="#00f000"/><rect x="395" y="38" width="1" height="1" fill="#00f000"/><rect x="396" y="36" width="1" height="1" fill="#00f000"/><rect x="396" y="37" width="1" height="1" fill="#00f000"/><rect x="397" y="37" width="1" height="1" fill="#00f000"/><rect x="398" y="37" width="1" height="1" fill="#00f000"/><rect x="399" y="36" width="1" height="1" fill="#00f000"/><rect x="400" y="36" width="1" height="1" fill="#00f000"/><rect x="401" y="36" width="1" height="1" fill="#00f000"/><rect x="402" y="36" width="1" height="1" fill="#00f000"/><rect x="403" y="36" width="1" height="1" fill="#00f000"/><rect x="404" y="36" width="1" height="1" fill="#00f000"/><rect x="405" y="36" width="1" height="1" fill="#00f000"/><rect x="406" y="35" width="1" height="1" fill="#00f000"/><rect x="407" y="35" width="1" height="1" fill="#00f000"/><rect x="408" y="36" width="1" height="1" fill="#00f000"/><rect x="409" y="36" width="1" height="1" fill="#00f000"/><rect x="409" y="37" width="1" height="1" fill="#00f000"/><rect x="410" y="34" width="1" height="1" fill="#00f000"/><rect x="410" y="35" width="1" height="1" fill="#00f000"/><rect x="411" y="35" width="1" height="1" fill="#00f000"/><rect x="412" y="35" width="1" height="1" fill="#00f000"/><rect x="413" y="36" width="1" height="1" fill="#00f000"/><rect x="414" y="34" width="1" height="1" fill="#00f000"/><rect x="414" y="35" width="1" height="1" fill="#00f000"/><rect x="415" y="35" width="1" height="1" fill="#00f000"/><rect x="416" y="35" width="1" height="1" fill="#00f000"/><rect x="417" y="36" width="1" height="1" fill="#00f000"/><rect x="418" y="36" width="1" height="1" fill="#00f000"/><rect x="419" y="37" width="1" height="1" fill="#00f000"/><rect x="420" y="38" width="1" height="1" fill="#00f000"/><rect x="421" y="36" width="1" height="1" fill="#00f000"/><rect x="421" y="37" width="1" height="1" fill="#00f000"/><rect x="421" y="38" width="1" height="1" fill="#00f000"/><rect x="421" y="39" width="1" height="1" fill="#00f000"/></svg>
<div class="t" style="left:454px;top:221px;font-size:12px;color:#000;font-weight:400;transform:scaleX(0.93);transform-origin:0 0;">Текущая:</div>
<div class="a" style="left:511px;top:217px;width:63px;height:23px;background:#f0f0f0;border:1px solid #a0a0a0;box-sizing:border-box;box-shadow:inset 1px 1px 0 #fff, inset -1px -1px 0 #fff"></div>
<div class="t" style="left:517px;top:221px;font-size:12px;color:#000;font-weight:400;transform:scaleX(0.87);transform-origin:0 0;">75.4 MB</div>
<div class="t" style="left:583px;top:221px;font-size:12px;color:#000;font-weight:400;transform:scaleX(0.93);transform-origin:0 0;">Средняя:</div>
<div class="a" style="left:637px;top:217px;width:57px;height:23px;background:#f0f0f0;border:1px solid #a0a0a0;box-sizing:border-box;box-shadow:inset 1px 1px 0 #fff, inset -1px -1px 0 #fff"></div>
<div class="t" style="left:643px;top:221px;font-size:12px;color:#000;font-weight:400;transform:scaleX(0.87);transform-origin:0 0;">75.2 MB</div>
<div class="a" style="left:698px;top:218px;width:74px;height:21px;background:#e1e1e1;border:1px solid #adadad;box-sizing:border-box;"></div>
<div class="t" style="left:701px;top:223px;font-size:12px;color:#000;font-weight:400;transform:scaleX(0.88);transform-origin:0 0;">KBytes</div>
<svg class="a" style="left:757.5px;top:225.75px" width="11" height="6.5"><polyline points="1,1 5.5,5.5 10,1" fill="none" stroke="#333" stroke-width="1"/></svg>
<div class="t" style="left:777px;top:221px;font-size:12px;color:#000;font-weight:400;transform:scaleX(0.93);transform-origin:0 0;">Ошибки:</div>
<div class="a" style="left:827px;top:217px;width:48px;height:23px;background:#f0f0f0;border:1px solid #a0a0a0;box-sizing:border-box;box-shadow:inset 1px 1px 0 #fff, inset -1px -1px 0 #fff"></div>
<div class="t" style="left:833px;top:221px;font-size:12px;color:#000;font-weight:400;transform:scaleX(0.87);transform-origin:0 0;">0</div>
<div class="t" style="left:454px;top:253px;font-size:12px;color:#000;font-weight:400;transform:scaleX(0.93);transform-origin:0 0;">Накопитель:</div>
<div class="a" style="left:527px;top:247px;width:213px;height:21px;background:#e1e1e1;border:1px solid #adadad;box-sizing:border-box;"></div>
<div class="t" style="left:530px;top:252px;font-size:12px;color:#000;font-weight:400;transform:scaleX(0.88);transform-origin:0 0;">E: (30.2 GB)</div>
<svg class="a" style="left:725.5px;top:254.75px" width="11" height="6.5"><polyline points="1,1 5.5,5.5 10,1" fill="none" stroke="#333" stroke-width="1"/></svg>
<div class="a" style="left:800px;top:253px;width:73px;height:21px;background:#e5f1fb;border:2px solid #0078d7;box-sizing:border-box;"></div>
<div class="t" style="left:636.5px;width:400px;text-align:center;top:258px;font-size:12px;color:#000;font-weight:400;transform:scaleX(0.93);">Старт</div>
<div class="t" style="left:454px;top:281px;font-size:12px;color:#000;font-weight:400;transform:scaleX(0.93);transform-origin:0 0;">Позиция (%):</div>
<div class="a" style="left:527px;top:277px;width:74px;height:23px;background:#fff;border:1px solid #7a7a7a;box-sizing:border-box;"></div>
<div class="t" style="left:533px;top:282px;font-size:12px;color:#000;font-weight:400;transform:scaleX(0.88);transform-origin:0 0;">0</div>
<div class="t" style="left:620px;top:281px;font-size:12px;color:#000;font-weight:400;transform:scaleX(0.89);transform-origin:0 0;">Размер блока:</div>
<div class="a" style="left:698px;top:277px;width:74px;height:21px;background:#e1e1e1;border:1px solid #adadad;box-sizing:border-box;"></div>
<div class="t" style="left:701px;top:282px;font-size:12px;color:#000;font-weight:400;transform:scaleX(0.88);transform-origin:0 0;">Авто</div>
<svg class="a" style="left:757.5px;top:284.75px" width="11" height="6.5"><polyline points="1,1 5.5,5.5 10,1" fill="none" stroke="#333" stroke-width="1"/></svg>
<div class="a" style="left:800px;top:281px;width:73px;height:21px;background:#e1e1e1;border:1px solid #adadad;box-sizing:border-box;"></div>
<div class="t" style="left:636.5px;width:400px;text-align:center;top:286px;font-size:12px;color:#000;font-weight:400;transform:scaleX(0.93);">Сброс</div>
<div class="t" style="left:454px;top:313px;font-size:12px;color:#000;font-weight:400;transform:scaleX(0.93);transform-origin:0 0;">Режим:</div>
<div class="a" style="left:511px;top:308px;width:141px;height:21px;background:#e1e1e1;border:1px solid #adadad;box-sizing:border-box;"></div>
<div class="t" style="left:514px;top:313px;font-size:12px;color:#000;font-weight:400;transform:scaleX(0.88);transform-origin:0 0;">Запись</div>
<svg class="a" style="left:637.5px;top:315.75px" width="11" height="6.5"><polyline points="1,1 5.5,5.5 10,1" fill="none" stroke="#333" stroke-width="1"/></svg>
<div class="a" style="left:662px;top:309px;width:13px;height:13px;background:#fff;border:1px solid #333;box-sizing:border-box;"></div>
<div class="t" style="left:678px;top:304px;font-size:12px;color:#000;font-weight:400;transform:scaleX(0.93);transform-origin:0 0;">Тестировать</div>
<div class="t" style="left:678px;top:317px;font-size:12px;color:#000;font-weight:400;transform:scaleX(0.93);transform-origin:0 0;">пиковую скорость</div>
<div class="a" style="left:800px;top:310px;width:73px;height:21px;background:#e1e1e1;border:1px solid #adadad;box-sizing:border-box;"></div>
<div class="t" style="left:636.5px;width:400px;text-align:center;top:315px;font-size:12px;color:#000;font-weight:400;transform:scaleX(0.87);">О программе</div>
<div class="t" style="left:454px;top:339px;font-size:12px;color:#000;font-weight:400;transform:scaleX(0.93);transform-origin:0 0;">Длительность (мм:сс):</div>
<div class="a" style="left:574px;top:335px;width:60px;height:23px;background:#fff;border:1px solid #7a7a7a;box-sizing:border-box;"></div>
<div class="t" style="left:580px;top:340px;font-size:12px;color:#000;font-weight:400;transform:scaleX(0.88);transform-origin:0 0;">00:00</div>
<div class="a" style="left:662px;top:335px;width:13px;height:13px;background:#fff;border:1px solid #333;box-sizing:border-box;"></div>
<div class="t" style="left:678px;top:330px;font-size:12px;color:#000;font-weight:400;transform:scaleX(0.93);transform-origin:0 0;">Сохранить</div>
<div class="t" style="left:678px;top:343px;font-size:12px;color:#000;font-weight:400;transform:scaleX(0.93);transform-origin:0 0;">результаты в файле</div>
<div class="a" style="left:800px;top:339px;width:73px;height:21px;background:#e1e1e1;border:1px solid #adadad;box-sizing:border-box;"></div>
<div class="t" style="left:636.5px;width:400px;text-align:center;top:344px;font-size:12px;color:#000;font-weight:400;transform:scaleX(0.93);">Выход</div>
<div class="a" style="left:662px;top:356px;width:13px;height:13px;background:#fff;border:1px solid #333;box-sizing:border-box;"></div>
<div class="t" style="left:678px;top:357px;font-size:12px;color:#000;font-weight:400;transform:scaleX(0.93);transform-origin:0 0;">Write zeros</div>
<div class="a" style="left:19px;top:373px;width:452px;height:371px;background:#f0f0f0;border:1px solid #2e3b4a;box-sizing:border-box;"></div>
<div class="a" style="left:20px;top:374px;width:450px;height:29px;background:#fff;"></div>
<div class="t" style="left:24px;top:381px;font-size:14px;color:#8c8c8c;font-weight:400;transform:scaleX(0.946);transform-origin:0 0;">H2testw | Progress</div>
<div class="a" style="left:332px;top:388px;width:12px;height:1px;background:#999;"></div>
<div class="a" style="left:384px;top:383px;width:12px;height:12px;border:1px solid #cfcfcf;box-sizing:border-box;"></div>
<svg class="a" style="left:436px;top:382px" width="14" height="14"><path d="M1.5 1.5 L12.5 12.5 M12.5 1.5 L1.5 12.5" stroke="#8c8c8c" stroke-width="1.05"/></svg>
<div class="a" style="left:33px;top:423px;width:208px;height:76px;border:1px solid #dcdcdc;box-sizing:border-box;"></div>
<div class="a" style="left:40px;top:415px;width:44px;height:16px;background:#f0f0f0;"></div>
<div class="t" style="left:43px;top:418px;font-size:12.5px;color:#000;font-weight:400;">Writing</div>
<div class="t" style="left:41px;top:442px;font-size:12.5px;color:#000;font-weight:400;transform:scaleX(0.98);transform-origin:0 0;">30882 MByte</div>
<div class="t" style="left:41px;top:460px;font-size:12.5px;color:#000;font-weight:400;transform:scaleX(0.98);transform-origin:0 0;">7:56 min</div>
<div class="t" style="left:41px;top:479px;font-size:12.5px;color:#000;font-weight:400;transform:scaleX(0.98);transform-origin:0 0;">64.8 MByte/s</div>
<div class="a" style="left:249px;top:423px;width:208px;height:76px;border:1px solid #dcdcdc;box-sizing:border-box;"></div>
<div class="a" style="left:256px;top:415px;width:56px;height:16px;background:#f0f0f0;"></div>
<div class="t" style="left:259px;top:418px;font-size:12.5px;color:#000;font-weight:400;">Verifying</div>
<div class="t" style="left:259px;top:442px;font-size:12.5px;color:#000;font-weight:400;transform:scaleX(0.98);transform-origin:0 0;">30882 MByte</div>
<div class="t" style="left:259px;top:460px;font-size:12.5px;color:#000;font-weight:400;transform:scaleX(0.98);transform-origin:0 0;">6:37 min</div>
<div class="t" style="left:259px;top:479px;font-size:12.5px;color:#000;font-weight:400;transform:scaleX(0.98);transform-origin:0 0;">77.6 MByte/s</div>
<div class="a" style="left:33px;top:505px;width:425px;height:147px;background:#f0f0f0;border:1px solid #828790;box-sizing:border-box;"></div>
<div class="t" style="left:40px;top:511px;font-size:12px;color:#000;font-weight:400;transform:scaleX(1.075);transform-origin:0 0;">Warning: Only 30882 of 30883 MByte tested.</div>
<div class="t" style="left:40px;top:526px;font-size:12px;color:#000;font-weight:400;transform:scaleX(1.075);transform-origin:0 0;">Test finished without errors.</div>
<div class="t" style="left:40px;top:541px;font-size:12px;color:#000;font-weight:400;transform:scaleX(1.075);transform-origin:0 0;">You can now delete the test files *.h2w or verify them again.</div>
<div class="t" style="left:40px;top:556px;font-size:12px;color:#000;font-weight:400;transform:scaleX(1.075);transform-origin:0 0;">Writing speed: 64.8 MByte/s</div>
<div class="t" style="left:40px;top:571px;font-size:12px;color:#000;font-weight:400;transform:scaleX(1.075);transform-origin:0 0;">Reading speed: 77.6 MByte/s</div>
<div class="t" style="left:40px;top:586px;font-size:12px;color:#000;font-weight:400;transform:scaleX(1.075);transform-origin:0 0;">H2testw v1.4</div>
<div class="a" style="left:437px;top:506px;width:20px;height:124px;background:#f0f0f0;"></div>
<div class="a" style="left:436px;top:506px;width:1px;height:124px;background:#f8f8f8;"></div>
<div class="a" style="left:34px;top:630px;width:423px;height:21px;background:#f0f0f0;"></div>
<div class="a" style="left:34px;top:629px;width:403px;height:1px;background:#f8f8f8;"></div>
<svg class="a" style="left:442px;top:515px" width="10" height="6"><polyline points="1,5 5,1 9,5" fill="none" stroke="#a3a3a3" stroke-width="1"/></svg>
<svg class="a" style="left:442.0px;top:618.0px" width="10" height="6"><polyline points="1,1 5.0,5 9,1" fill="none" stroke="#a3a3a3" stroke-width="1"/></svg>
<svg class="a" style="left:41px;top:635px" width="6" height="10"><polyline points="5,1 1,5 5,9" fill="none" stroke="#a3a3a3" stroke-width="1"/></svg>
<svg class="a" style="left:424px;top:635px" width="6" height="10"><polyline points="1,1 5,5 1,9" fill="none" stroke="#a3a3a3" stroke-width="1"/></svg>
<div class="a" style="left:33px;top:662px;width:425px;height:27px;background:#06b025;border:1px solid #bcbcbc;box-sizing:border-box;"></div>
<div class="a" style="left:34px;top:703px;width:179px;height:25px;background:#e1e1e1;border:1px solid #adadad;box-sizing:border-box;"></div>
<div class="t" style="left:-77px;width:400px;text-align:center;top:710px;font-size:12.4px;color:#000;font-weight:400;transform:scaleX(1.0);">Copy to clipboard</div>
<div class="a" style="left:372px;top:703px;width:86px;height:25px;background:#e1e1e1;border:1px solid #adadad;box-sizing:border-box;"></div>
<div class="t" style="left:215px;width:400px;text-align:center;top:710px;font-size:12.4px;color:#000;font-weight:400;transform:scaleX(1.0);">OK</div>
<div class="a" style="left:479px;top:373px;width:407px;height:371px;border:1px solid #2a3c50;box-sizing:border-box;background:repeating-linear-gradient(135deg,#fdfdfd 0px,#fdfdfd 3px,#f7f7f7 3px,#f7f7f7 4.5px)"></div>
<div class="a" style="left:480px;top:374px;width:405px;height:44px;background:#fff;"></div>
<div class="a" style="left:480px;top:417px;width:405px;height:1px;background:#f2f2f2;"></div>
<svg class="a" style="left:483px;top:377px" width="17" height="17"><rect x="0.8" y="1.3" width="15" height="3.2" rx="1" fill="#40c840" stroke="#10a010" stroke-width="1"/><rect x="0.8" y="4.6" width="10.8" height="3.2" rx="1" fill="#50d050" stroke="#10a010" stroke-width="1"/><rect x="1" y="9.5" width="15" height="6.5" rx="2" fill="#d0d0dc" stroke="#707070" stroke-width="1.2"/><rect x="12" y="11" width="1.5" height="3.5" fill="#20c020"/></svg>
<div class="t" style="left:505px;top:379px;font-size:12.5px;color:#9a9a9a;font-weight:400;transform:scaleX(0.91);transform-origin:0 0;">CrystalDiskMark 5.2.0 x64</div>
<div class="a" style="left:764px;top:386px;width:11px;height:1px;background:#8c8c8c;"></div>
<div class="a" style="left:810px;top:381px;width:11px;height:11px;border:1px solid #d0d0d0;box-sizing:border-box;"></div>
<svg class="a" style="left:856px;top:380px" width="13" height="13"><path d="M1.5 1.5 L11.5 11.5 M11.5 1.5 L1.5 11.5" stroke="#8c8c8c" stroke-width="1.05"/></svg>
<div class="t" style="left:488px;top:403px;font-size:12px;color:#6e6e6e;font-weight:400;transform:scaleX(0.99);transform-origin:0 0;">Файл</div>
<div class="t" style="left:531px;top:403px;font-size:12px;color:#6e6e6e;font-weight:400;transform:scaleX(0.99);transform-origin:0 0;">Настройки</div>
<div class="t" style="left:606px;top:403px;font-size:12px;color:#6e6e6e;font-weight:400;transform:scaleX(0.99);transform-origin:0 0;">Вид</div>
<div class="t" style="left:640px;top:403px;font-size:12px;color:#6e6e6e;font-weight:400;transform:scaleX(0.99);transform-origin:0 0;">Помощь</div>
<div class="t" style="left:704px;top:403px;font-size:12px;color:#6e6e6e;font-weight:400;transform:scaleX(0.99);transform-origin:0 0;">Язык(Language)</div>
<div class="a" style="left:493px;top:428px;width:63px;height:50px;border:1px solid #8a9a86;box-sizing:border-box;background:linear-gradient(to bottom,#f0f6ee 0%,#d8ecd0 10%,#a8dc90 26%,#78d440 40%,#5cd800 52%,#62dc06 74%,#7ee62c 87%,#aef070 95%,#d0f8b0 100%)"></div>
<div class="t" style="left:515px;top:445px;font-size:17px;color:#505050;font-weight:400;font-style:italic;">All</div>
<div class="a" style="left:560px;top:431px;width:36px;height:21px;background:#fff;border:1px solid #7a7a7a;box-sizing:border-box;"></div>
<div class="t" style="left:564px;top:435px;font-size:13.5px;color:#000;font-weight:400;transform:scaleX(0.96);transform-origin:0 0;">1</div>
<svg class="a" style="left:580px;top:436px" width="13" height="9"><polyline points="1.5,1.5 6.5,6.5 11.5,1.5" fill="none" stroke="#111" stroke-width="1.9"/></svg>
<div class="a" style="left:603px;top:431px;width:80px;height:21px;background:#fff;border:1px solid #7a7a7a;box-sizing:border-box;"></div>
<div class="t" style="left:607px;top:435px;font-size:13.5px;color:#000;font-weight:400;transform:scaleX(0.96);transform-origin:0 0;">4GiB</div>
<svg class="a" style="left:667px;top:436px" width="13" height="9"><polyline points="1.5,1.5 6.5,6.5 11.5,1.5" fill="none" stroke="#111" stroke-width="1.9"/></svg>
<div class="a" style="left:689px;top:431px;width:183px;height:21px;background:#fff;border:1px solid #7a7a7a;box-sizing:border-box;"></div>
<div class="t" style="left:693px;top:435px;font-size:13.5px;color:#000;font-weight:400;transform:scaleX(0.9408);transform-origin:0 0;">Select Folder</div>
<svg class="a" style="left:856px;top:436px" width="13" height="9"><polyline points="1.5,1.5 6.5,6.5 11.5,1.5" fill="none" stroke="#111" stroke-width="1.9"/></svg>
<div class="t" style="left:579px;top:460px;font-size:17px;color:#333;font-weight:700;transform:scaleX(1.17);transform-origin:0 0;">Read [MB/s]</div>
<div class="t" style="left:735px;top:460px;font-size:17px;color:#333;font-weight:700;transform:scaleX(1.21);transform-origin:0 0;">Write [MB/s]</div>
<div class="a" style="left:493px;top:482px;width:63px;height:51px;border:1px solid #8a9a86;box-sizing:border-box;background:linear-gradient(to bottom,#f0f6ee 0%,#d8ecd0 10%,#a8dc90 26%,#78d440 40%,#5cd800 52%,#62dc06 74%,#7ee62c 87%,#aef070 95%,#d0f8b0 100%)"></div>
<div class="a" style="left:560px;top:482px;width:154px;height:51px;border:1px solid #c4c4c4;box-sizing:border-box;background:rgba(255,255,255,0.85)"></div>
<div class="a" style="left:561px;top:483px;width:90px;height:49px;background:linear-gradient(to bottom,#f2f6f0 0%,#e4f0e0 12%,#c0e4b0 28%,#98dc78 42%,#7ad838 55%,#78e030 72%,#8ae848 85%,#b0f080 94%,#d4f8c0 100%);border-right:1px solid #3a9a3a;box-sizing:border-box"></div>
<div class="t" style="right:743px;top:486px;font-size:45px;color:#404040;font-weight:700;text-align:right;transform:scaleX(1.116);transform-origin:100% 0;">93.09</div>
<div class="a" style="left:718px;top:482px;width:154px;height:51px;border:1px solid #c4c4c4;box-sizing:border-box;background:rgba(255,255,255,0.85)"></div>
<div class="a" style="left:719px;top:483px;width:88px;height:49px;background:linear-gradient(to bottom,#f2f6f0 0%,#e4f0e0 12%,#c0e4b0 28%,#98dc78 42%,#7ad838 55%,#78e030 72%,#8ae848 85%,#b0f080 94%,#d4f8c0 100%);border-right:1px solid #3a9a3a;box-sizing:border-box"></div>
<div class="t" style="right:585px;top:486px;font-size:45px;color:#404040;font-weight:700;text-align:right;transform:scaleX(1.116);transform-origin:100% 0;">81.73</div>
<div class="t" style="left:325px;width:400px;text-align:center;top:492px;font-size:12.5px;color:#555;font-weight:400;transform:scaleX(0.97);">Seq</div>
<div class="t" style="left:325px;width:400px;text-align:center;top:509px;font-size:12.5px;color:#555;font-weight:400;transform:scaleX(0.97);">Q32T1</div>
<div class="a" style="left:493px;top:537px;width:63px;height:50px;border:1px solid #8a9a86;box-sizing:border-box;background:linear-gradient(to bottom,#f0f6ee 0%,#d8ecd0 10%,#a8dc90 26%,#78d440 40%,#5cd800 52%,#62dc06 74%,#7ee62c 87%,#aef070 95%,#d0f8b0 100%)"></div>
<div class="a" style="left:560px;top:537px;width:154px;height:50px;border:1px solid #c4c4c4;box-sizing:border-box;background:rgba(255,255,255,0.85)"></div>
<div class="a" style="left:561px;top:538px;width:58px;height:48px;background:linear-gradient(to bottom,#f2f6f0 0%,#e4f0e0 12%,#c0e4b0 28%,#98dc78 42%,#7ad838 55%,#78e030 72%,#8ae848 85%,#b0f080 94%,#d4f8c0 100%);border-right:1px solid #3a9a3a;box-sizing:border-box"></div>
<div class="t" style="right:743px;top:540px;font-size:45px;color:#404040;font-weight:700;text-align:right;transform:scaleX(1.116);transform-origin:100% 0;">8.491</div>
<div class="a" style="left:718px;top:537px;width:154px;height:50px;border:1px solid #c4c4c4;box-sizing:border-box;background:rgba(255,255,255,0.85)"></div>
<div class="a" style="left:719px;top:538px;width:33px;height:48px;background:linear-gradient(to bottom,#f2f6f0 0%,#e4f0e0 12%,#c0e4b0 28%,#98dc78 42%,#7ad838 55%,#78e030 72%,#8ae848 85%,#b0f080 94%,#d4f8c0 100%);border-right:1px solid #3a9a3a;box-sizing:border-box"></div>
<div class="t" style="right:585px;top:540px;font-size:45px;color:#404040;font-weight:700;text-align:right;transform:scaleX(1.116);transform-origin:100% 0;">1.259</div>
<div class="t" style="left:325px;width:400px;text-align:center;top:547px;font-size:12.5px;color:#555;font-weight:400;transform:scaleX(0.97);">4K</div>
<div class="t" style="left:325px;width:400px;text-align:center;top:564px;font-size:12.5px;color:#555;font-weight:400;transform:scaleX(0.97);">Q32T1</div>
<div class="a" style="left:493px;top:592px;width:63px;height:50px;border:1px solid #8a9a86;box-sizing:border-box;background:linear-gradient(to bottom,#f0f6ee 0%,#d8ecd0 10%,#a8dc90 26%,#78d440 40%,#5cd800 52%,#62dc06 74%,#7ee62c 87%,#aef070 95%,#d0f8b0 100%)"></div>
<div class="a" style="left:560px;top:592px;width:154px;height:50px;border:1px solid #c4c4c4;box-sizing:border-box;background:rgba(255,255,255,0.85)"></div>
<div class="a" style="left:561px;top:593px;width:89px;height:48px;background:linear-gradient(to bottom,#f2f6f0 0%,#e4f0e0 12%,#c0e4b0 28%,#98dc78 42%,#7ad838 55%,#78e030 72%,#8ae848 85%,#b0f080 94%,#d4f8c0 100%);border-right:1px solid #3a9a3a;box-sizing:border-box"></div>
<div class="t" style="right:743px;top:595px;font-size:45px;color:#404040;font-weight:700;text-align:right;transform:scaleX(1.116);transform-origin:100% 0;">88.71</div>
<div class="a" style="left:718px;top:592px;width:154px;height:50px;border:1px solid #c4c4c4;box-sizing:border-box;background:rgba(255,255,255,0.85)"></div>
<div class="a" style="left:719px;top:593px;width:87px;height:48px;background:linear-gradient(to bottom,#f2f6f0 0%,#e4f0e0 12%,#c0e4b0 28%,#98dc78 42%,#7ad838 55%,#78e030 72%,#8ae848 85%,#b0f080 94%,#d4f8c0 100%);border-right:1px solid #3a9a3a;box-sizing:border-box"></div>
<div class="t" style="right:585px;top:595px;font-size:45px;color:#404040;font-weight:700;text-align:right;transform:scaleX(1.116);transform-origin:100% 0;">76.06</div>
<div class="t" style="left:325px;width:400px;text-align:center;top:609px;font-size:16.5px;color:#555;font-weight:400;transform:scaleX(0.98);">Seq</div>
<div class="a" style="left:493px;top:647px;width:63px;height:50px;border:1px solid #8a9a86;box-sizing:border-box;background:linear-gradient(to bottom,#f0f6ee 0%,#d8ecd0 10%,#a8dc90 26%,#78d440 40%,#5cd800 52%,#62dc06 74%,#7ee62c 87%,#aef070 95%,#d0f8b0 100%)"></div>
<div class="a" style="left:560px;top:647px;width:154px;height:50px;border:1px solid #c4c4c4;box-sizing:border-box;background:rgba(255,255,255,0.85)"></div>
<div class="a" style="left:561px;top:648px;width:56px;height:48px;background:linear-gradient(to bottom,#f2f6f0 0%,#e4f0e0 12%,#c0e4b0 28%,#98dc78 42%,#7ad838 55%,#78e030 72%,#8ae848 85%,#b0f080 94%,#d4f8c0 100%);border-right:1px solid #3a9a3a;box-sizing:border-box"></div>
<div class="t" style="right:743px;top:650px;font-size:45px;color:#404040;font-weight:700;text-align:right;transform:scaleX(1.116);transform-origin:100% 0;">7.120</div>
<div class="a" style="left:718px;top:647px;width:154px;height:50px;border:1px solid #c4c4c4;box-sizing:border-box;background:rgba(255,255,255,0.85)"></div>
<div class="a" style="left:719px;top:648px;width:28px;height:48px;background:linear-gradient(to bottom,#f2f6f0 0%,#e4f0e0 12%,#c0e4b0 28%,#98dc78 42%,#7ad838 55%,#78e030 72%,#8ae848 85%,#b0f080 94%,#d4f8c0 100%);border-right:1px solid #3a9a3a;box-sizing:border-box"></div>
<div class="t" style="right:585px;top:650px;font-size:45px;color:#404040;font-weight:700;text-align:right;transform:scaleX(1.116);transform-origin:100% 0;">0.918</div>
<div class="t" style="left:325px;width:400px;text-align:center;top:664px;font-size:16.5px;color:#555;font-weight:400;transform:scaleX(0.98);">4K</div>
<div class="a" style="left:493px;top:705px;width:379px;height:30px;border:1px solid #b8b8b8;box-sizing:border-box;background:rgba(255,255,255,0.6)"></div>
<div class="a" style="left:888px;top:0px;width:558px;height:743px;background:linear-gradient(to bottom,#1c2a3a 0%,#24405a 45%,#2a6a98 100%);"></div>
<div class="a" style="left:889px;top:1px;width:556px;height:741px;background:#f0f0f0;"></div>
<div class="a" style="left:889px;top:1px;width:556px;height:61px;background:#fff;"></div>
<div class="a" style="left:889px;top:61px;width:556px;height:1px;background:#a0a0a0;"></div>
<div class="a" style="left:889px;top:62px;width:556px;height:35px;background:#fff;"></div>
<div class="a" style="left:889px;top:62px;width:244px;height:35px;background:#f0f0f0;"></div>
<div class="a" style="left:1132px;top:62px;width:1px;height:35px;background:#a0a0a0;"></div>
<div class="a" style="left:889px;top:97px;width:556px;height:1px;background:#6a6a6a;"></div>
<div class="a" style="left:889px;top:98px;width:556px;height:1px;background:#a0a0a0;"></div>
<svg class="a" style="left:897px;top:6px" width="23" height="23"><ellipse cx="8.5" cy="11.5" rx="4.8" ry="10" fill="none" stroke="#ff1a1a" stroke-width="1.7" transform="rotate(32 8.5 11.5)"/><rect x="7.5" y="8.5" width="13" height="7" fill="#8e8480" stroke="#d83838" stroke-width="1.6"/><rect x="9.5" y="10.5" width="9" height="3" fill="#c8c0bc"/></svg>
<div class="t" style="left:925px;top:12px;font-size:14px;color:#8c8c8c;font-weight:400;">Untitled - ATTO Disk Benchmark</div>
<div class="a" style="left:1303px;top:18px;width:11px;height:1px;background:#8c8c8c;"></div>
<div class="a" style="left:1357px;top:13px;width:11px;height:11px;border:1px solid #8c8c8c;box-sizing:border-box;"></div>
<svg class="a" style="left:1410px;top:12px" width="13" height="13"><path d="M1.5 1.5 L11.5 11.5 M11.5 1.5 L1.5 11.5" stroke="#8c8c8c" stroke-width="1.05"/></svg>
<div class="t" style="left:898px;top:41px;font-size:15px;color:#707070;font-weight:400;transform:scaleX(0.92);transform-origin:0 0;">File</div>
<div class="t" style="left:936px;top:41px;font-size:15px;color:#707070;font-weight:400;transform:scaleX(0.92);transform-origin:0 0;">View</div>
<div class="t" style="left:983px;top:41px;font-size:15px;color:#707070;font-weight:400;transform:scaleX(0.92);transform-origin:0 0;">Help</div>
<div class="a" style="left:896px;top:66px;width:27px;height:27px;background:#f0f0f0;box-shadow:inset 1px 1px 0 #fff, inset -1px -1px 0 #696969, inset 2px 2px 0 #e3e3e3, inset -2px -2px 0 #a0a0a0"></div>
<div class="a" style="left:923px;top:66px;width:27px;height:27px;background:#f0f0f0;box-shadow:inset 1px 1px 0 #fff, inset -1px -1px 0 #696969, inset 2px 2px 0 #e3e3e3, inset -2px -2px 0 #a0a0a0"></div>
<div class="a" style="left:950px;top:66px;width:27px;height:27px;background:#f0f0f0;box-shadow:inset 1px 1px 0 #fff, inset -1px -1px 0 #696969, inset 2px 2px 0 #e3e3e3, inset -2px -2px 0 #a0a0a0"></div>
<div class="a" style="left:988px;top:66px;width:27px;height:27px;background:#f0f0f0;box-shadow:inset 1px 1px 0 #fff, inset -1px -1px 0 #696969, inset 2px 2px 0 #e3e3e3, inset -2px -2px 0 #a0a0a0"></div>
<div class="a" style="left:1015px;top:66px;width:27px;height:27px;background:#f0f0f0;box-shadow:inset 1px 1px 0 #fff, inset -1px -1px 0 #696969, inset 2px 2px 0 #e3e3e3, inset -2px -2px 0 #a0a0a0"></div>
<div class="a" style="left:1043px;top:66px;width:27px;height:27px;background:#f0f0f0;box-shadow:inset 1px 1px 0 #fff, inset -1px -1px 0 #696969, inset 2px 2px 0 #e3e3e3, inset -2px -2px 0 #a0a0a0"></div>
<div class="a" style="left:1070px;top:66px;width:27px;height:27px;background:#f0f0f0;box-shadow:inset 1px 1px 0 #fff, inset -1px -1px 0 #696969, inset 2px 2px 0 #e3e3e3, inset -2px -2px 0 #a0a0a0"></div>
<div class="a" style="left:1098px;top:66px;width:27px;height:27px;background:#f0f0f0;box-shadow:inset 1px 1px 0 #fff, inset -1px -1px 0 #696969, inset 2px 2px 0 #e3e3e3, inset -2px -2px 0 #a0a0a0"></div>
<svg class="a" style="left:898px;top:68px" width="23" height="23"><path d="M6.5 4.5 H14 L17.5 8 V19.5 H6.5 Z" fill="#fff" stroke="#000" stroke-width="1.6"/><path d="M14 4.5 V8 H17.5" fill="none" stroke="#000" stroke-width="1"/></svg>
<svg class="a" style="left:925px;top:68px" width="23" height="23"><path d="M2.5 9 H8 L9 11 H14 V19 H2.5 Z" fill="#ffff50" stroke="#000" stroke-width="1"/><path d="M2.5 19.5 L6.5 13 H20 L16 19.5 Z" fill="#8a8a00" stroke="#000" stroke-width="1.2"/><path d="M12 6.5 Q15 2 19 5.5" fill="none" stroke="#000" stroke-width="1.3"/><path d="M19.5 3.5 V7 H16" fill="none" stroke="#000" stroke-width="1.2"/></svg>
<svg class="a" style="left:952px;top:68px" width="23" height="23"><rect x="4.5" y="4" width="16" height="15.5" fill="#8a8a00" stroke="#000" stroke-width="1.6"/><rect x="7" y="5" width="11" height="6.5" fill="#eee"/><rect x="7" y="13.5" width="11" height="6" fill="#000"/><rect x="13.5" y="14.5" width="2.5" height="4" fill="#fff"/></svg>
<svg class="a" style="left:990px;top:68px" width="23" height="23"><path d="M8 3.5 H17 L14.5 10 H5.5 Z" fill="#fff" stroke="#000" stroke-width="1.3"/><path d="M8 6 H14 M7 8 H13" stroke="#000" stroke-width="1"/><rect x="3" y="10" width="14" height="9" rx="2" fill="#fff" stroke="#000" stroke-width="1.5"/><path d="M3.5 13.5 H16.5" stroke="#000" stroke-width="1"/><rect x="9" y="14.5" width="4" height="2" fill="#cc0"/><path d="M17 8.5 L21 11 V17 L17 19.5" fill="#ccc" stroke="#000" stroke-width="1.2"/></svg>
<svg class="a" style="left:1017px;top:68px" width="23" height="23"><path d="M4.5 4 H12 L15 7 V19.5 H4.5 Z" fill="#fff" stroke="#000" stroke-width="1.5"/><circle cx="13.5" cy="13.5" r="3.8" fill="#dff" stroke="#333" stroke-width="1.6"/><path d="M12 12 L13.5 12.5" stroke="#0ee" stroke-width="1.5"/><path d="M16.3 16.3 L20 20" stroke="#000" stroke-width="2.2"/></svg>
<svg class="a" style="left:1045px;top:68px" width="23" height="23"><path d="M11 3 V19 M3 11 H19" stroke="#000080" stroke-width="1.6"/><path d="M11 2 L8 6 H14 Z M11 20 L8 16 H14 Z M2 11 L6 8 V14 Z M20 11 L16 8 V14 Z" fill="#000080"/></svg>
<svg class="a" style="left:1072px;top:68px" width="23" height="23"><path d="M8.5 7.5 Q8.5 3.5 12.5 3.5 Q16.5 3.5 16.5 7 Q16.5 9.5 13 11 V13.5" fill="none" stroke="#000" stroke-width="4.4"/><path d="M8.5 7.5 Q8.5 3.5 12.5 3.5 Q16.5 3.5 16.5 7 Q16.5 9.5 13 11 V13.5" fill="none" stroke="#ee0" stroke-width="2.2"/><circle cx="13" cy="17" r="2" fill="#ee0" stroke="#000" stroke-width="1.2"/></svg>
<svg class="a" style="left:1100px;top:68px" width="23" height="23"><path d="M3.5 4 L3.5 17 L6.5 14 L9.5 20 L11.5 19 L8.5 13 H12.5 Z" fill="#000"/><path d="M12.5 7.5 Q12.5 3.5 16 3.5 Q19.5 3.5 19.5 7 Q19.5 9 16.5 10.5 V12.5" fill="none" stroke="#000080" stroke-width="2.4"/><rect x="15" y="14" width="3" height="2.5" fill="#000080"/></svg>
<div class="a" style="left:889px;top:98px;width:2px;height:619px;background:#858585;"></div>
<div class="a" style="left:889px;top:717px;width:556px;height:1px;background:#fff;"></div>
<div class="t" style="left:892px;top:724px;font-size:15px;color:#000;font-weight:400;transform:scaleX(0.88);transform-origin:0 0;">For Help, press F1</div>
<svg class="a" style="left:1428px;top:728px" width="14" height="14"><path d="M13 2 L2 13 M13 6 L6 13 M13 10 L10 13" stroke="#a0a0a0" stroke-width="1"/><path d="M13 3 L3 13 M13 7 L7 13 M13 11 L11 13" stroke="#fff" stroke-width="1"/></svg>
<div class="t" style="left:905px;top:112px;font-size:14px;color:#000;font-weight:400;transform:scaleX(0.864);transform-origin:0 0;"><u>D</u>rive:</div>
<div class="a" style="left:996px;top:108px;width:90px;height:23px;background:#fff;box-shadow:inset 1px 1px 0 #a0a0a0, inset -1px -1px 0 #fff, inset 2px 2px 0 #696969, inset -2px -2px 0 #e3e3e3"></div>
<div class="a" style="left:1066px;top:110px;width:18px;height:19px;background:#f0f0f0;box-shadow:inset 1px 1px 0 #fff, inset -1px -1px 0 #696969, inset 2px 2px 0 #e3e3e3, inset -2px -2px 0 #a0a0a0"></div>
<svg class="a" style="left:1070px;top:117px" width="9" height="5"><polygon points="0,0 9,0 4.5,4.5" fill="#000"/></svg>
<div class="t" style="left:1000px;top:112px;font-size:14px;color:#000;font-weight:400;transform:scaleX(0.9);transform-origin:0 0;">[-e-]</div>
<div class="t" style="left:906px;top:142px;font-size:14px;color:#000;font-weight:400;transform:scaleX(0.846);transform-origin:0 0;">Transfer Si<u>z</u>e:</div>
<div class="a" style="left:996px;top:138px;width:90px;height:24px;background:#fff;box-shadow:inset 1px 1px 0 #a0a0a0, inset -1px -1px 0 #fff, inset 2px 2px 0 #696969, inset -2px -2px 0 #e3e3e3"></div>
<div class="a" style="left:1066px;top:140px;width:18px;height:20px;background:#f0f0f0;box-shadow:inset 1px 1px 0 #fff, inset -1px -1px 0 #696969, inset 2px 2px 0 #e3e3e3, inset -2px -2px 0 #a0a0a0"></div>
<svg class="a" style="left:1070px;top:147px" width="9" height="5"><polygon points="0,0 9,0 4.5,4.5" fill="#000"/></svg>
<div class="t" style="left:831.0px;width:400px;text-align:center;top:143px;font-size:14px;color:#000;font-weight:400;transform:scaleX(0.9);">0.5</div>
<div class="t" style="left:1092px;top:142px;font-size:14px;color:#000;font-weight:400;transform:scaleX(0.9);transform-origin:0 0;"><u>t</u>o</div>
<div class="a" style="left:1110px;top:139px;width:90px;height:23px;background:#fff;box-shadow:inset 1px 1px 0 #a0a0a0, inset -1px -1px 0 #fff, inset 2px 2px 0 #696969, inset -2px -2px 0 #e3e3e3"></div>
<div class="a" style="left:1180px;top:141px;width:18px;height:19px;background:#f0f0f0;box-shadow:inset 1px 1px 0 #fff, inset -1px -1px 0 #696969, inset 2px 2px 0 #e3e3e3, inset -2px -2px 0 #a0a0a0"></div>
<svg class="a" style="left:1184px;top:148px" width="9" height="5"><polygon points="0,0 9,0 4.5,4.5" fill="#000"/></svg>
<div class="t" style="left:1114px;top:143px;font-size:14px;color:#000;font-weight:400;transform:scaleX(0.9);transform-origin:0 0;">8192.0</div>
<div class="t" style="left:1211px;top:142px;font-size:14px;color:#000;font-weight:400;transform:scaleX(0.9);transform-origin:0 0;">KB</div>
<div class="t" style="left:906px;top:173px;font-size:14px;color:#000;font-weight:400;transform:scaleX(0.855);transform-origin:0 0;">Total <u>L</u>ength:</div>
<div class="a" style="left:996px;top:169px;width:90px;height:23px;background:#fff;box-shadow:inset 1px 1px 0 #a0a0a0, inset -1px -1px 0 #fff, inset 2px 2px 0 #696969, inset -2px -2px 0 #e3e3e3"></div>
<div class="a" style="left:1066px;top:171px;width:18px;height:19px;background:#f0f0f0;box-shadow:inset 1px 1px 0 #fff, inset -1px -1px 0 #696969, inset 2px 2px 0 #e3e3e3, inset -2px -2px 0 #a0a0a0"></div>
<svg class="a" style="left:1070px;top:178px" width="9" height="5"><polygon points="0,0 9,0 4.5,4.5" fill="#000"/></svg>
<div class="t" style="left:1000px;top:173px;font-size:14px;color:#000;font-weight:400;transform:scaleX(0.9);transform-origin:0 0;">2 GB</div>
<div class="a" style="left:1110px;top:109px;width:14px;height:14px;background:#fff;box-shadow:inset 1px 1px 0 #a0a0a0, inset -1px -1px 0 #fff, inset 2px 2px 0 #696969, inset -2px -2px 0 #e3e3e3"></div>
<div class="t" style="left:1132px;top:109px;font-size:14px;color:#000;font-weight:400;transform:scaleX(0.8865);transform-origin:0 0;">Force Write <u>A</u>ccess</div>
<div class="a" style="left:1284px;top:109px;width:14px;height:14px;background:#fff;box-shadow:inset 1px 1px 0 #a0a0a0, inset -1px -1px 0 #fff, inset 2px 2px 0 #696969, inset -2px -2px 0 #e3e3e3"></div>
<svg class="a" style="left:1286px;top:111px" width="10" height="10"><polyline points="1.5,4.5 4,7.5 8.5,1.5" fill="none" stroke="#000" stroke-width="2"/></svg>
<div class="t" style="left:1306px;top:109px;font-size:14px;color:#000;font-weight:400;transform:scaleX(0.9);transform-origin:0 0;">Di<u>r</u>ect I/O</div>
<div class="a" style="left:1278px;top:128px;width:151px;height:68px;border:1px solid #a0a0a0;box-sizing:border-box;box-shadow:inset 1px 1px 0 #fff, 1px 1px 0 #fff"></div>
<svg class="a" style="left:1285px;top:136px" width="14" height="14"><circle cx="7" cy="7" r="5.5" fill="#fff" stroke="#a0a0a0" stroke-width="1"/><path d="M2.5 10 A5.5 5.5 0 0 1 10 2.5" fill="none" stroke="#696969" stroke-width="1"/></svg>
<div class="t" style="left:1306px;top:136px;font-size:14px;color:#000;font-weight:400;transform:scaleX(0.873);transform-origin:0 0;">I/O <u>C</u>omparison</div>
<svg class="a" style="left:1285px;top:155px" width="14" height="14"><circle cx="7" cy="7" r="5.5" fill="#fff" stroke="#a0a0a0" stroke-width="1"/><path d="M2.5 10 A5.5 5.5 0 0 1 10 2.5" fill="none" stroke="#696969" stroke-width="1"/><circle cx="7" cy="7" r="2" fill="#000"/></svg>
<div class="t" style="left:1306px;top:155px;font-size:14px;color:#000;font-weight:400;transform:scaleX(0.873);transform-origin:0 0;"><u>O</u>verlapped I/O</div>
<svg class="a" style="left:1285px;top:175px" width="14" height="14"><circle cx="7" cy="7" r="5.5" fill="#fff" stroke="#a0a0a0" stroke-width="1"/><path d="M2.5 10 A5.5 5.5 0 0 1 10 2.5" fill="none" stroke="#696969" stroke-width="1"/></svg>
<div class="t" style="left:1306px;top:175px;font-size:14px;color:#000;font-weight:400;transform:scaleX(0.873);transform-origin:0 0;"><u>N</u>either</div>
<div class="t" style="left:1285px;top:204px;font-size:14px;color:#000;font-weight:400;transform:scaleX(0.8775);transform-origin:0 0;"><u>Q</u>ueue Depth:</div>
<div class="a" style="left:1375px;top:201px;width:53px;height:23px;background:#fff;box-shadow:inset 1px 1px 0 #a0a0a0, inset -1px -1px 0 #fff, inset 2px 2px 0 #696969, inset -2px -2px 0 #e3e3e3"></div>
<div class="a" style="left:1408px;top:203px;width:18px;height:19px;background:#f0f0f0;box-shadow:inset 1px 1px 0 #fff, inset -1px -1px 0 #696969, inset 2px 2px 0 #e3e3e3, inset -2px -2px 0 #a0a0a0"></div>
<svg class="a" style="left:1412px;top:210px" width="9" height="5"><polygon points="0,0 9,0 4.5,4.5" fill="#000"/></svg>
<div class="t" style="left:1380px;top:205px;font-size:14px;color:#000;font-weight:400;transform:scaleX(0.9);transform-origin:0 0;">4</div>
<div class="t" style="left:905px;top:231px;font-size:14px;color:#000;font-weight:400;transform:scaleX(0.846);transform-origin:0 0;">Controlled <u>b</u>y:</div>
<div class="a" style="left:905px;top:249px;width:251px;height:22px;background:#fff;box-shadow:inset 1px 1px 0 #a0a0a0, inset -1px -1px 0 #fff, inset 2px 2px 0 #696969, inset -2px -2px 0 #e3e3e3"></div>
<div class="a" style="left:1136px;top:251px;width:18px;height:18px;background:#f0f0f0;box-shadow:inset 1px 1px 0 #fff, inset -1px -1px 0 #696969, inset 2px 2px 0 #e3e3e3, inset -2px -2px 0 #a0a0a0"></div>
<svg class="a" style="left:1140px;top:257px" width="9" height="5"><polygon points="0,0 9,0 4.5,4.5" fill="#000"/></svg>
<div class="a" style="left:1348px;top:249px;width:82px;height:22px;background:#f0f0f0;box-shadow:inset 1px 1px 0 #8a8a8a, inset -1px -1px 0 #505050, inset 2px 2px 0 #fff, inset -2px -2px 0 #8a8a8a"></div>
<div class="t" style="left:1189px;width:400px;text-align:center;top:252px;font-size:14px;color:#000;font-weight:400;transform:scaleX(0.9);"><u>S</u>tart</div>
<div class="a" style="left:905px;top:280px;width:524px;height:52px;background:#fff;box-shadow:inset 1px 1px 0 #a0a0a0, inset -1px -1px 0 #fff, inset 2px 2px 0 #696969, inset -2px -2px 0 #e3e3e3"></div>
<div class="a" style="left:1408px;top:282px;width:19px;height:48px;background:#f4f4f4;"></div>
<svg class="a" style="left:1412px;top:287px" width="11" height="7"><polyline points="1,6 5.5,1.5 10,6" fill="none" stroke="#b8b8b8" stroke-width="1.2"/></svg>
<svg class="a" style="left:1412px;top:318px" width="11" height="7"><polyline points="1,1 5.5,5.5 10,1" fill="none" stroke="#b8b8b8" stroke-width="1.2"/></svg>
<div class="t" style="left:908px;top:284px;font-size:14px;color:#000;font-weight:400;transform:scaleX(0.873);transform-origin:0 0;">&lt;&lt; Description &gt;&gt;</div>
<div class="a" style="left:905px;top:345px;width:523px;height:340px;border:1px solid #a0a0a0;box-sizing:border-box;box-shadow:inset 1px 1px 0 #fff, 1px 1px 0 #fff"></div>
<div class="a" style="left:1128px;top:338px;width:78px;height:15px;background:#f0f0f0;"></div>
<div class="t" style="left:1132px;top:338px;font-size:14px;color:#000;font-weight:400;transform:scaleX(0.882);transform-origin:0 0;">Test Results</div>
<div class="t" style="left:1067px;top:357px;font-size:14px;color:#000;font-weight:400;transform:scaleX(0.9);transform-origin:0 0;">Write</div>
<div class="a" style="left:1106px;top:361px;width:30px;height:7px;background:#ff0000;"></div>
<div class="t" style="left:1166px;top:357px;font-size:14px;color:#000;font-weight:400;transform:scaleX(0.9);transform-origin:0 0;">Read</div>
<div class="a" style="left:1205px;top:361px;width:30px;height:7px;background:#008000;"></div>
<div class="t" style="left:1320px;top:357px;font-size:14px;color:#000;font-weight:400;transform:scaleX(0.9);transform-origin:0 0;">Write</div>
<div class="t" style="left:1378px;top:357px;font-size:14px;color:#000;font-weight:400;transform:scaleX(0.9);transform-origin:0 0;">Read</div>
<div class="a" style="left:951px;top:376px;width:358px;height:266px;background:#fff;box-shadow:inset 1px 1px 0 #a0a0a0, inset -1px -1px 0 #d0d0d0"></div>
<div class="a" style="left:987px;top:377px;width:1px;height:264px;background:#2828ff;"></div>
<div class="a" style="left:1023px;top:377px;width:1px;height:264px;background:#2828ff;"></div>
<div class="a" style="left:1059px;top:377px;width:1px;height:264px;background:#2828ff;"></div>
<div class="a" style="left:1095px;top:377px;width:1px;height:264px;background:#2828ff;"></div>
<div class="a" style="left:1130px;top:377px;width:1px;height:264px;background:#2828ff;"></div>
<div class="a" style="left:1166px;top:377px;width:1px;height:264px;background:#2828ff;"></div>
<div class="a" style="left:1202px;top:377px;width:1px;height:264px;background:#2828ff;"></div>
<div class="a" style="left:1238px;top:377px;width:1px;height:264px;background:#2828ff;"></div>
<div class="a" style="left:1274px;top:377px;width:1px;height:264px;background:#2828ff;"></div>
<div class="a" style="left:952px;top:388px;width:2px;height:6px;background:#008000;"></div>
<div class="t" style="right:498px;top:382px;font-size:14px;color:#000;font-weight:400;text-align:right;transform:scaleX(0.873);transform-origin:100% 0;">0.5</div>
<div class="t" style="right:84px;top:382px;font-size:14px;color:#000;font-weight:400;text-align:right;transform:scaleX(0.873);transform-origin:100% 0;">231</div>
<div class="t" style="right:27px;top:382px;font-size:14px;color:#000;font-weight:400;text-align:right;transform:scaleX(0.873);transform-origin:100% 0;">1033</div>
<div class="a" style="left:952px;top:405px;width:6px;height:6px;background:#008000;"></div>
<div class="t" style="right:498px;top:399px;font-size:14px;color:#000;font-weight:400;text-align:right;transform:scaleX(0.873);transform-origin:100% 0;">1.0</div>
<div class="t" style="right:84px;top:399px;font-size:14px;color:#000;font-weight:400;text-align:right;transform:scaleX(0.873);transform-origin:100% 0;">462</div>
<div class="t" style="right:27px;top:399px;font-size:14px;color:#000;font-weight:400;text-align:right;transform:scaleX(0.873);transform-origin:100% 0;">2071</div>
<div class="a" style="left:952px;top:416px;width:2px;height:6px;background:#ff0000;"></div>
<div class="a" style="left:952px;top:422px;width:14px;height:6px;background:#008000;"></div>
<div class="t" style="right:498px;top:416px;font-size:14px;color:#000;font-weight:400;text-align:right;transform:scaleX(0.873);transform-origin:100% 0;">2.0</div>
<div class="t" style="right:84px;top:416px;font-size:14px;color:#000;font-weight:400;text-align:right;transform:scaleX(0.873);transform-origin:100% 0;">926</div>
<div class="t" style="right:27px;top:416px;font-size:14px;color:#000;font-weight:400;text-align:right;transform:scaleX(0.873);transform-origin:100% 0;">4123</div>
<div class="a" style="left:952px;top:434px;width:5px;height:6px;background:#ff0000;"></div>
<div class="a" style="left:952px;top:440px;width:28px;height:6px;background:#008000;"></div>
<div class="t" style="right:498px;top:434px;font-size:14px;color:#000;font-weight:400;text-align:right;transform:scaleX(0.873);transform-origin:100% 0;">4.0</div>
<div class="t" style="right:84px;top:434px;font-size:14px;color:#000;font-weight:400;text-align:right;transform:scaleX(0.873);transform-origin:100% 0;">1861</div>
<div class="t" style="right:27px;top:434px;font-size:14px;color:#000;font-weight:400;text-align:right;transform:scaleX(0.873);transform-origin:100% 0;">8284</div>
<div class="a" style="left:952px;top:451px;width:12px;height:6px;background:#ff0000;"></div>
<div class="a" style="left:952px;top:457px;width:55px;height:6px;background:#008000;"></div>
<div class="t" style="right:498px;top:451px;font-size:14px;color:#000;font-weight:400;text-align:right;transform:scaleX(0.873);transform-origin:100% 0;">8.0</div>
<div class="t" style="right:84px;top:451px;font-size:14px;color:#000;font-weight:400;text-align:right;transform:scaleX(0.873);transform-origin:100% 0;">3740</div>
<div class="t" style="right:27px;top:451px;font-size:14px;color:#000;font-weight:400;text-align:right;transform:scaleX(0.873);transform-origin:100% 0;">15603</div>
<div class="a" style="left:952px;top:468px;width:26px;height:6px;background:#ff0000;"></div>
<div class="a" style="left:952px;top:474px;width:84px;height:6px;background:#008000;"></div>
<div class="t" style="right:498px;top:468px;font-size:14px;color:#000;font-weight:400;text-align:right;transform:scaleX(0.873);transform-origin:100% 0;">16.0</div>
<div class="t" style="right:84px;top:468px;font-size:14px;color:#000;font-weight:400;text-align:right;transform:scaleX(0.873);transform-origin:100% 0;">7728</div>
<div class="t" style="right:27px;top:468px;font-size:14px;color:#000;font-weight:400;text-align:right;transform:scaleX(0.873);transform-origin:100% 0;">23918</div>
<div class="a" style="left:952px;top:486px;width:49px;height:6px;background:#ff0000;"></div>
<div class="a" style="left:952px;top:492px;width:137px;height:6px;background:#008000;"></div>
<div class="t" style="right:498px;top:486px;font-size:14px;color:#000;font-weight:400;text-align:right;transform:scaleX(0.873);transform-origin:100% 0;">32.0</div>
<div class="t" style="right:84px;top:486px;font-size:14px;color:#000;font-weight:400;text-align:right;transform:scaleX(0.873);transform-origin:100% 0;">14063</div>
<div class="t" style="right:27px;top:486px;font-size:14px;color:#000;font-weight:400;text-align:right;transform:scaleX(0.873);transform-origin:100% 0;">38550</div>
<div class="a" style="left:952px;top:503px;width:251px;height:6px;background:#ff0000;"></div>
<div class="a" style="left:952px;top:509px;width:330px;height:6px;background:#008000;"></div>
<div class="t" style="right:498px;top:503px;font-size:14px;color:#000;font-weight:400;text-align:right;transform:scaleX(0.873);transform-origin:100% 0;">64.0</div>
<div class="t" style="right:84px;top:503px;font-size:14px;color:#000;font-weight:400;text-align:right;transform:scaleX(0.873);transform-origin:100% 0;">70620</div>
<div class="t" style="right:27px;top:503px;font-size:14px;color:#000;font-weight:400;text-align:right;transform:scaleX(0.873);transform-origin:100% 0;">92739</div>
<div class="a" style="left:952px;top:520px;width:288px;height:6px;background:#ff0000;"></div>
<div class="a" style="left:952px;top:526px;width:329px;height:6px;background:#008000;"></div>
<div class="t" style="right:498px;top:520px;font-size:14px;color:#000;font-weight:400;text-align:right;transform:scaleX(0.873);transform-origin:100% 0;">128.0</div>
<div class="t" style="right:84px;top:520px;font-size:14px;color:#000;font-weight:400;text-align:right;transform:scaleX(0.873);transform-origin:100% 0;">80742</div>
<div class="t" style="right:27px;top:520px;font-size:14px;color:#000;font-weight:400;text-align:right;transform:scaleX(0.873);transform-origin:100% 0;">92304</div>
<div class="a" style="left:952px;top:538px;width:287px;height:6px;background:#ff0000;"></div>
<div class="a" style="left:952px;top:544px;width:329px;height:6px;background:#008000;"></div>
<div class="t" style="right:498px;top:538px;font-size:14px;color:#000;font-weight:400;text-align:right;transform:scaleX(0.873);transform-origin:100% 0;">256.0</div>
<div class="t" style="right:84px;top:538px;font-size:14px;color:#000;font-weight:400;text-align:right;transform:scaleX(0.873);transform-origin:100% 0;">80535</div>
<div class="t" style="right:27px;top:538px;font-size:14px;color:#000;font-weight:400;text-align:right;transform:scaleX(0.873);transform-origin:100% 0;">92467</div>
<div class="a" style="left:952px;top:555px;width:288px;height:6px;background:#ff0000;"></div>
<div class="a" style="left:952px;top:561px;width:331px;height:6px;background:#008000;"></div>
<div class="t" style="right:498px;top:555px;font-size:14px;color:#000;font-weight:400;text-align:right;transform:scaleX(0.873);transform-origin:100% 0;">512.0</div>
<div class="t" style="right:84px;top:555px;font-size:14px;color:#000;font-weight:400;text-align:right;transform:scaleX(0.873);transform-origin:100% 0;">80908</div>
<div class="t" style="right:27px;top:555px;font-size:14px;color:#000;font-weight:400;text-align:right;transform:scaleX(0.873);transform-origin:100% 0;">92958</div>
<div class="a" style="left:952px;top:572px;width:289px;height:6px;background:#ff0000;"></div>
<div class="a" style="left:952px;top:578px;width:331px;height:6px;background:#008000;"></div>
<div class="t" style="right:498px;top:572px;font-size:14px;color:#000;font-weight:400;text-align:right;transform:scaleX(0.873);transform-origin:100% 0;">1024.0</div>
<div class="t" style="right:84px;top:572px;font-size:14px;color:#000;font-weight:400;text-align:right;transform:scaleX(0.873);transform-origin:100% 0;">81033</div>
<div class="t" style="right:27px;top:572px;font-size:14px;color:#000;font-weight:400;text-align:right;transform:scaleX(0.873);transform-origin:100% 0;">92876</div>
<div class="a" style="left:952px;top:590px;width:288px;height:6px;background:#ff0000;"></div>
<div class="a" style="left:952px;top:596px;width:332px;height:6px;background:#008000;"></div>
<div class="t" style="right:498px;top:590px;font-size:14px;color:#000;font-weight:400;text-align:right;transform:scaleX(0.873);transform-origin:100% 0;">2048.0</div>
<div class="t" style="right:84px;top:590px;font-size:14px;color:#000;font-weight:400;text-align:right;transform:scaleX(0.873);transform-origin:100% 0;">80815</div>
<div class="t" style="right:27px;top:590px;font-size:14px;color:#000;font-weight:400;text-align:right;transform:scaleX(0.873);transform-origin:100% 0;">93123</div>
<div class="a" style="left:952px;top:607px;width:289px;height:6px;background:#ff0000;"></div>
<div class="a" style="left:952px;top:613px;width:332px;height:6px;background:#008000;"></div>
<div class="t" style="right:498px;top:607px;font-size:14px;color:#000;font-weight:400;text-align:right;transform:scaleX(0.873);transform-origin:100% 0;">4096.0</div>
<div class="t" style="right:84px;top:607px;font-size:14px;color:#000;font-weight:400;text-align:right;transform:scaleX(0.873);transform-origin:100% 0;">81251</div>
<div class="t" style="right:27px;top:607px;font-size:14px;color:#000;font-weight:400;text-align:right;transform:scaleX(0.873);transform-origin:100% 0;">93125</div>
<div class="a" style="left:952px;top:624px;width:290px;height:6px;background:#ff0000;"></div>
<div class="a" style="left:952px;top:630px;width:331px;height:6px;background:#008000;"></div>
<div class="t" style="right:498px;top:624px;font-size:14px;color:#000;font-weight:400;text-align:right;transform:scaleX(0.873);transform-origin:100% 0;">8192.0</div>
<div class="t" style="right:84px;top:624px;font-size:14px;color:#000;font-weight:400;text-align:right;transform:scaleX(0.873);transform-origin:100% 0;">81344</div>
<div class="t" style="right:27px;top:624px;font-size:14px;color:#000;font-weight:400;text-align:right;transform:scaleX(0.873);transform-origin:100% 0;">92803</div>
<div class="t" style="left:751.2px;width:400px;text-align:center;top:652px;font-size:14px;color:#000;font-weight:400;transform:scaleX(0.9);">0</div>
<div class="t" style="left:786.96px;width:400px;text-align:center;top:652px;font-size:14px;color:#000;font-weight:400;transform:scaleX(0.9);">10</div>
<div class="t" style="left:822.72px;width:400px;text-align:center;top:652px;font-size:14px;color:#000;font-weight:400;transform:scaleX(0.9);">20</div>
<div class="t" style="left:858.48px;width:400px;text-align:center;top:652px;font-size:14px;color:#000;font-weight:400;transform:scaleX(0.9);">30</div>
<div class="t" style="left:894.24px;width:400px;text-align:center;top:652px;font-size:14px;color:#000;font-weight:400;transform:scaleX(0.9);">40</div>
<div class="t" style="left:930.0px;width:400px;text-align:center;top:652px;font-size:14px;color:#000;font-weight:400;transform:scaleX(0.9);">50</div>
<div class="t" style="left:965.76px;width:400px;text-align:center;top:652px;font-size:14px;color:#000;font-weight:400;transform:scaleX(0.9);">60</div>
<div class="t" style="left:1001.52px;width:400px;text-align:center;top:652px;font-size:14px;color:#000;font-weight:400;transform:scaleX(0.9);">70</div>
<div class="t" style="left:1037.28px;width:400px;text-align:center;top:652px;font-size:14px;color:#000;font-weight:400;transform:scaleX(0.9);">80</div>
<div class="t" style="left:1073.04px;width:400px;text-align:center;top:652px;font-size:14px;color:#000;font-weight:400;transform:scaleX(0.9);">90</div>
<div class="t" style="left:1108.8px;width:400px;text-align:center;top:652px;font-size:14px;color:#000;font-weight:400;transform:scaleX(0.9);">100</div>
<div class="t" style="left:1053px;top:668px;font-size:14px;color:#000;font-weight:400;transform:scaleX(0.891);transform-origin:0 0;">Transfer Rate - MB / Sec</div>
</body></html>
